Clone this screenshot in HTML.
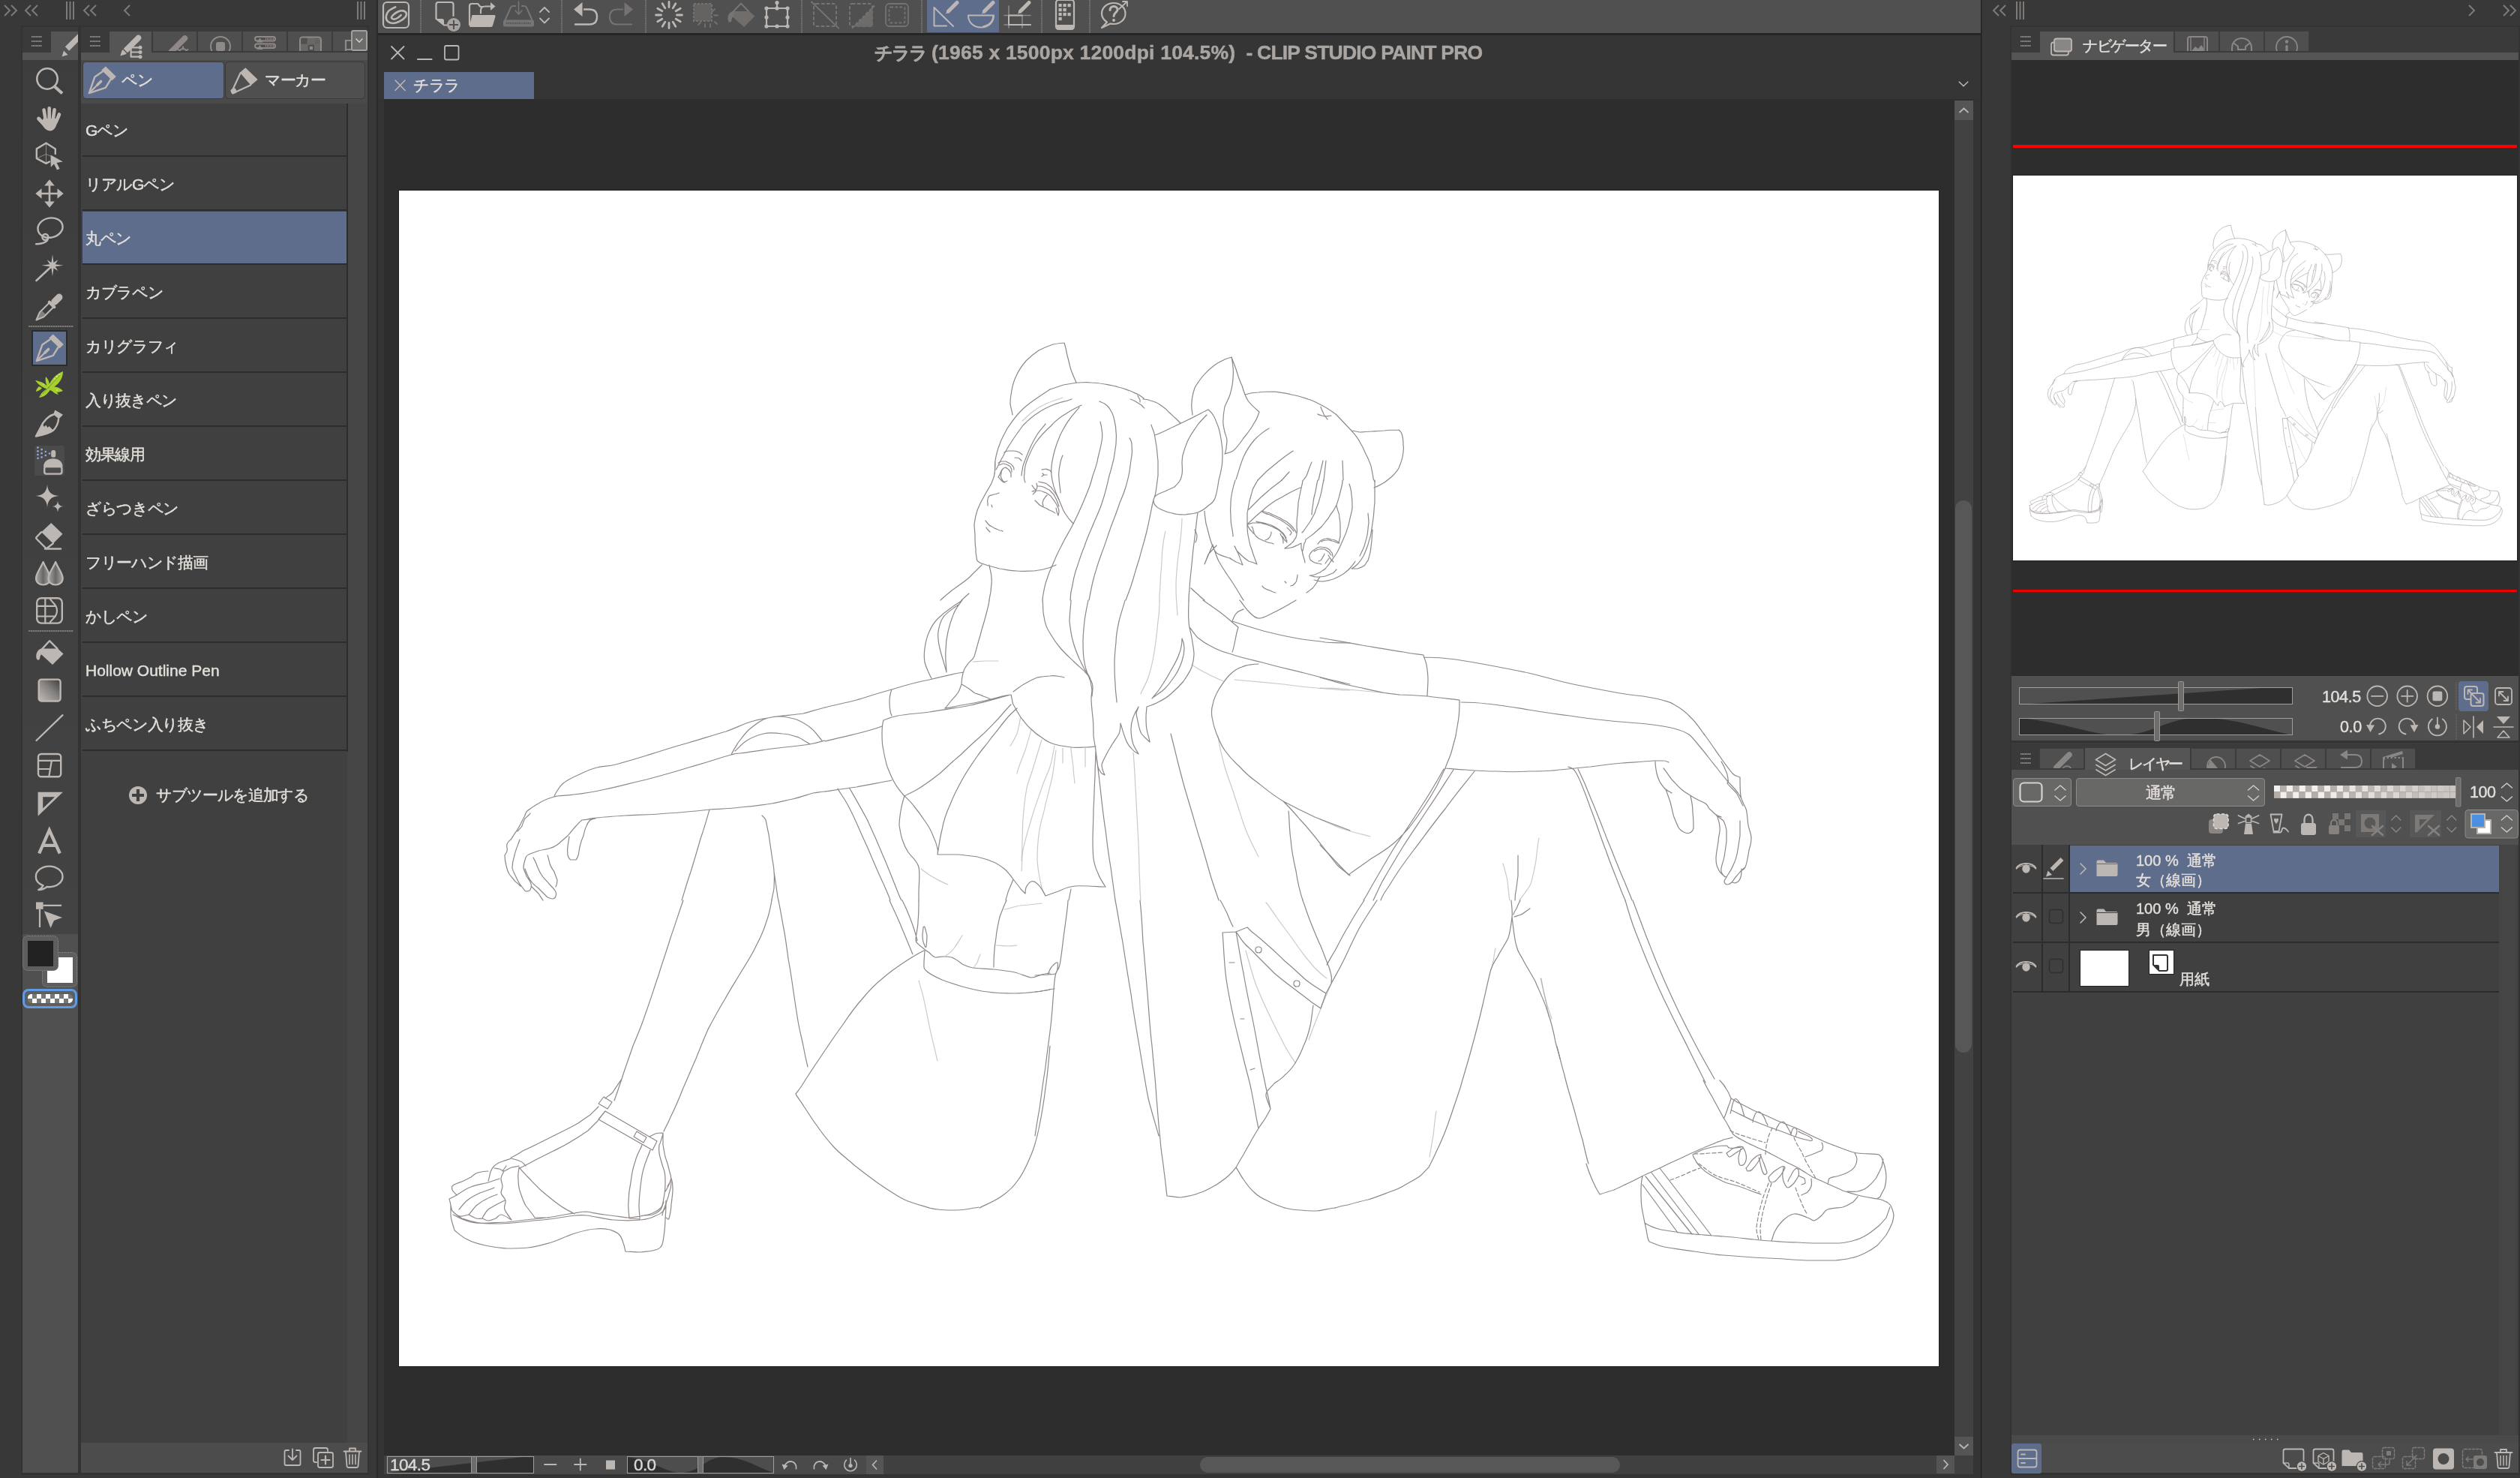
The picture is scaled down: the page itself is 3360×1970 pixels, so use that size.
<!DOCTYPE html>
<html lang="ja"><head><meta charset="utf-8"><title>CLIP STUDIO PAINT PRO</title>
<style>
*{box-sizing:border-box;margin:0;padding:0}
html,body{width:3360px;height:1970px;overflow:hidden;background:#383838}
body{position:relative;font-family:"Liberation Sans",sans-serif;color:#e2deda;-webkit-font-smoothing:antialiased}
.t{-webkit-text-stroke:.45px currentColor;will-change:transform}
.a{position:absolute}
.t{position:absolute;white-space:nowrap;line-height:1}
svg{position:absolute;overflow:visible}
.ic{fill:none;stroke:#bdb7b3;stroke-width:2.4;stroke-linecap:round;stroke-linejoin:round}
.if{fill:#bdb7b3;stroke:none}
.dim{opacity:.5}

</style></head>
<body>
<svg width="0" height="0" style="position:absolute">
<defs>

</defs>
</svg>
<svg style="left:0;top:0" width="500" height="36" viewBox="0 0 500 36">
<g fill="none" stroke="#7d7a78" stroke-width="2">
<path d="M6 7l7 7-7 7M15 7l7 7-7 7"/>
<path d="M41 7l-7 7 7 7M50 7l-7 7 7 7"/>
<path d="M89 2v24M93.5 2v24M98 2v24"/>
<path d="M119 7l-7 7 7 7M128 7l-7 7 7 7"/>
<path d="M173 7l-7 7 7 7"/>
<path d="M477 2v24M481.500 2v24M486 2v24"/>
</g></svg>
<div class="a" style="left:28px;top:34px;width:464px;height:1932px;background:#333;"></div>
<div class="a" style="left:30px;top:36px;width:74px;height:44px;background:#3a3a3a;"></div>
<div class="a" style="left:68px;top:42px;width:36px;height:38px;background:#555;"></div>
<div class="a" style="left:30px;top:70px;width:74px;height:10px;background:#555;"></div>
<div class="a" style="left:30px;top:80px;width:74px;height:1165px;background:linear-gradient(180deg,#3d3d3d,#434343);"></div>
<div class="a" style="left:30px;top:1245px;width:74px;height:718px;background:#505050;"></div>
<div class="a" style="left:108px;top:36px;width:382px;height:44px;background:#3a3a3a;"></div>
<div class="a" style="left:146px;top:42px;width:56px;height:38px;background:#555;"></div>
<div class="a" style="left:204px;top:42px;width:58px;height:26px;background:#4f4f4f;box-shadow:0 0 0 1px #3d3d3d"></div>
<div class="a" style="left:264px;top:42px;width:58px;height:26px;background:#4f4f4f;box-shadow:0 0 0 1px #3d3d3d"></div>
<div class="a" style="left:324px;top:42px;width:58px;height:26px;background:#4f4f4f;box-shadow:0 0 0 1px #3d3d3d"></div>
<div class="a" style="left:384px;top:42px;width:58px;height:26px;background:#4f4f4f;box-shadow:0 0 0 1px #3d3d3d"></div>
<div class="a" style="left:444px;top:42px;width:46px;height:26px;background:#4f4f4f;box-shadow:0 0 0 1px #3d3d3d"></div>
<div class="a" style="left:108px;top:70px;width:382px;height:10px;background:#555;"></div>
<div class="a" style="left:108px;top:80px;width:382px;height:58px;background:#4a4a4a;"></div>
<div class="a" style="left:108px;top:138px;width:382px;height:1785px;background:#404040;"></div>
<div class="a" style="left:463px;top:138px;width:27px;height:1785px;background:#464646;"></div>
<div class="a" style="left:108px;top:1923px;width:382px;height:40px;background:#4c4c4c;"></div>
<div class="a" style="left:111px;top:83px;width:187px;height:48px;background:#5f6d8c;border-radius:4px;box-shadow:0 0 0 1px #3c3c3c"></div>
<div class="a" style="left:301px;top:83px;width:185px;height:48px;background:#4f4f4f;border-radius:4px;box-shadow:0 0 0 1px #3a3a3a"></div>
<div class="t" style="left:162px;top:96px;font-size:21px;color:#e2deda;letter-spacing:-1.4px">ペン</div>
<div class="t" style="left:353px;top:96px;font-size:21px;color:#e2deda;letter-spacing:-1.4px">マーカー</div>
<div class="a" style="left:110px;top:207px;width:353px;height:2px;background:#2c2c2c;"></div>
<div class="t" style="left:114px;top:163px;font-size:21px;color:#e2deda;letter-spacing:-1.35px">Gペン</div>
<div class="a" style="left:110px;top:279px;width:353px;height:2px;background:#2c2c2c;"></div>
<div class="t" style="left:114px;top:235px;font-size:21px;color:#e2deda;letter-spacing:-1.35px">リアルGペン</div>
<div class="a" style="left:110px;top:282px;width:353px;height:69px;background:#5f6d8c;"></div>
<div class="a" style="left:110px;top:351px;width:353px;height:2px;background:#2c2c2c;"></div>
<div class="t" style="left:114px;top:307px;font-size:21px;color:#e2deda;letter-spacing:-1.35px">丸ペン</div>
<div class="a" style="left:110px;top:423px;width:353px;height:2px;background:#2c2c2c;"></div>
<div class="t" style="left:114px;top:379px;font-size:21px;color:#e2deda;letter-spacing:-1.35px">カブラペン</div>
<div class="a" style="left:110px;top:495px;width:353px;height:2px;background:#2c2c2c;"></div>
<div class="t" style="left:114px;top:451px;font-size:21px;color:#e2deda;letter-spacing:-1.35px">カリグラフィ</div>
<div class="a" style="left:110px;top:567px;width:353px;height:2px;background:#2c2c2c;"></div>
<div class="t" style="left:114px;top:523px;font-size:21px;color:#e2deda;letter-spacing:-1.35px">入り抜きペン</div>
<div class="a" style="left:110px;top:639px;width:353px;height:2px;background:#2c2c2c;"></div>
<div class="t" style="left:114px;top:595px;font-size:21px;color:#e2deda;letter-spacing:-1.35px">効果線用</div>
<div class="a" style="left:110px;top:711px;width:353px;height:2px;background:#2c2c2c;"></div>
<div class="t" style="left:114px;top:667px;font-size:21px;color:#e2deda;letter-spacing:-1.35px">ざらつきペン</div>
<div class="a" style="left:110px;top:783px;width:353px;height:2px;background:#2c2c2c;"></div>
<div class="t" style="left:114px;top:739px;font-size:21px;color:#e2deda;letter-spacing:-1.35px">フリーハンド描画</div>
<div class="a" style="left:110px;top:855px;width:353px;height:2px;background:#2c2c2c;"></div>
<div class="t" style="left:114px;top:811px;font-size:21px;color:#e2deda;letter-spacing:-1.35px">かしペン</div>
<div class="a" style="left:110px;top:927px;width:353px;height:2px;background:#2c2c2c;"></div>
<div class="t" style="left:114px;top:883px;font-size:21px;color:#e2deda;">Hollow Outline Pen</div>
<div class="a" style="left:110px;top:999px;width:353px;height:2px;background:#2c2c2c;"></div>
<div class="t" style="left:114px;top:955px;font-size:21px;color:#e2deda;letter-spacing:-1.35px">ふちペン入り抜き</div>
<div class="a" style="left:462px;top:138px;width:2px;height:864px;background:#2c2c2c;"></div>
<div class="t" style="left:208px;top:1049px;font-size:21px;color:#e2deda;letter-spacing:-1.35px">サブツールを追加する</div>
<svg style="left:119px;top:47px" width="16" height="16" viewBox="0 0 16 16"><path d="M1 2H15M1 8H15M1 14H15" stroke="#8a8785" stroke-width="2" stroke-dasharray="1.5 .5"/></svg>
<svg style="left:156px;top:42px" width="40" height="40" viewBox="0 0 40 40"><g fill="none" stroke="#bdb7b3" stroke-width="2.4" stroke-linecap="round" stroke-linejoin="round"><path d="M28.500 8.500L11 26" stroke-width="7.500"/><path fill="#bdb7b3" stroke="none" d="M4.300 32.600L6.600 25.200L11.800 30.200Z"/><path d="M8.300 23.600L13.500 28.800" stroke="#555" stroke-width="1.400"/><path d="M31 21.300H18.600V33.700H31M18.600 27.500H31" stroke-width="2.200"/><circle fill="#bdb7b3" stroke="none" cx="31" cy="21.300" r="2.500"/><circle fill="#bdb7b3" stroke="none" cx="31" cy="27.500" r="2.500"/><circle fill="#bdb7b3" stroke="none" cx="31" cy="33.700" r="2.500"/></g></svg>
<svg style="left:206px;top:44px;overflow:hidden" width="54" height="24" viewBox="0 0 54 24"><g fill="none" stroke="#8e8986" stroke-linecap="round"><path d="M40.500 7L22 25.500" stroke-width="7.500"/><circle cx="38" cy="26" r="5" stroke-width="2"/><path d="M38 18.500V20.500M31.500 22L33.200 23M44.500 22L42.800 23" stroke-width="2"/></g></svg>
<svg style="left:266px;top:44px;overflow:hidden" width="54" height="24" viewBox="0 0 54 24"><circle cx="28" cy="18" r="13" fill="none" stroke="#8e8986" stroke-width="2"/><rect x="22" y="12" width="12" height="12" rx="2.500" fill="#8e8986"/></svg>
<svg style="left:326px;top:44px;overflow:hidden" width="54" height="24" viewBox="0 0 54 24"><g fill="none" stroke="#8e8986" stroke-width="2"><rect x="14" y="5" width="27" height="5.600" rx="2.800"/><rect x="14" y="14.500" width="27" height="5.600" rx="2.800"/></g><path fill="#8e8986" d="M16.500 12.500L20.500 6.500L24.500 12.500ZM16.500 22L20.500 16L24.500 22Z"/><path d="M28 7.800H39M28 17.300H39" stroke="#8e8986" stroke-width="2.400" stroke-dasharray="1 1"/></svg>
<svg style="left:386px;top:44px;overflow:hidden" width="54" height="24" viewBox="0 0 54 24"><path d="M14 24V9.500Q14 5.500 18 5.500H38Q42 5.500 42 9.500V24" fill="#6a6866" stroke="#8e8986" stroke-width="2"/><rect x="15.200" y="6.700" width="8.500" height="8" fill="#505050"/><rect x="24.500" y="15.500" width="8.500" height="8.500" fill="#505050"/><rect x="27" y="18" width="4" height="4" fill="#8e8986"/><path d="M34.500 7.500H40M34.500 10.500H40M34.500 13H40" stroke="#505050" stroke-width="1.200" stroke-dasharray="1.500 1"/></svg>
<svg style="left:446px;top:44px;overflow:hidden" width="22" height="24" viewBox="0 0 22 24"><path d="M22 10H15V22H22M15 27V22" fill="none" stroke="#8e8986" stroke-width="2.200"/></svg>
<div class="a" style="left:468px;top:40px;width:22px;height:28px;background:#6c6c6a;border:2px solid #a39f9c;border-radius:3px"></div>
<svg style="left:468px;top:40px" width="22" height="28" viewBox="0 0 22 28"><path d="M6.500 11.500L11 16L15.500 11.500" fill="none" stroke="#cfcac6" stroke-width="1.600"/></svg>
<svg style="left:116px;top:87px" width="40" height="40" viewBox="0 0 40 40"><g fill="none" stroke="#bdb7b3" stroke-width="2.4" stroke-linecap="round" stroke-linejoin="round"><path fill="#bdb7b3" stroke="none" d="M24.800 1.600L38.800 15L33.600 20.200L19.300 6.500Z"/><path d="M20.500 8.500L10.400 15.400L2.800 37.100L24.800 29.800L31.500 19"/><path d="M3.500 36.400L18.500 21.500" stroke-width="2.200"/><path d="M14 26L18.600 21.400" stroke-width="3.600"/></g></svg>
<svg style="left:306px;top:87px" width="40" height="40" viewBox="0 0 40 40"><g fill="none" stroke="#bdb7b3" stroke-width="2.4" stroke-linecap="round" stroke-linejoin="round"><path fill="#bdb7b3" stroke="none" d="M21.300 3.300L37.700 18.900L28.600 26.800L13.800 9.700Z"/><path d="M14.500 10.500L4.500 32M28 26.500L8.500 35.500" stroke-width="2.200"/><rect fill="#bdb7b3" stroke="none" x="1.800" y="31" width="7.400" height="7" rx="2.200" transform="rotate(-24 5.500 34.500)"/></g></svg>
<svg style="left:171px;top:1047px" width="26" height="26" viewBox="0 0 26 26"><circle cx="13" cy="13" r="12" fill="#bdb7b3"/><path d="M13 5V21M5 13H21" stroke="#404040" stroke-width="4.200"/></svg>
<svg style="left:376px;top:1929px" width="28" height="28" viewBox="0 0 28 28"><g fill="none" stroke="#bdb7b3" stroke-width="1.800" stroke-linejoin="round" stroke-linecap="round"><path d="M9 4H5.500Q3.500 4 3.500 6V22Q3.500 24 5.500 24H22.500Q24.500 24 24.500 22V6Q24.500 4 22.500 4H19"/><path d="M14 2.500V17M8.500 11.500L14 17L19.500 11.500"/></g></svg>
<svg style="left:415px;top:1927px" width="32" height="32" viewBox="0 0 32 32"><g fill="none" stroke="#bdb7b3" stroke-width="1.800" stroke-linejoin="round" stroke-linecap="round"><path d="M7 22H5.500Q3 22 3 19.500V5.500Q3 3 5.500 3H19.500Q22 3 22 5.500V7"/><rect x="9" y="9" width="20" height="20" rx="2.500"/><path d="M19 13.500V24.500M13.500 19H24.500" stroke-width="2.200"/></g></svg>
<svg style="left:456px;top:1927px" width="28" height="32" viewBox="0 0 28 32"><g fill="none" stroke="#bdb7b3" stroke-width="1.800" stroke-linecap="round" stroke-linejoin="round"><path d="M2.500 7.500H25.500M10 7V3.500H18V7M5 7.500L6.500 27Q6.700 29 8.700 29H19.300Q21.300 29 21.500 27L23 7.500"/><path d="M10 12V24.500M14 12V24.500M18 12V24.500" stroke-width="1.600"/></g></svg>
<svg style="left:46px;top:88px" width="40" height="40" viewBox="0 0 40 40"><g fill="none" stroke="#bdb7b3" stroke-width="2.4" stroke-linecap="round" stroke-linejoin="round"><circle cx="17" cy="17" r="13.7" stroke-width="2.6"/><path d="M27 27.5L37 36.5" stroke-width="4.2" stroke-linecap="butt"/></g></svg>
<svg style="left:46px;top:138px" width="40" height="40" viewBox="0 0 40 40"><g fill="none" stroke="#bdb7b3" stroke-width="2.4" stroke-linecap="round" stroke-linejoin="round"><g stroke-width="4.6"><path d="M14.8 22L12.6 8.5M19.7 21V6.2M24.6 22L26.6 8.2M28.5 25L33 14.5"/><path d="M12.5 27.5L5.5 20" stroke-width="4.8"/></g><path fill="#bdb7b3" stroke="none" d="M11.5 20H29.5L30 25C29.5 31 25.5 36.5 21 36.5C16 36.5 12 32 9.5 27Z"/></g></svg>
<svg style="left:46px;top:188px" width="40" height="40" viewBox="0 0 40 40"><g fill="none" stroke="#bdb7b3" stroke-width="2.4" stroke-linecap="round" stroke-linejoin="round"><path d="M15.5 2.8L2.8 10.4V23.1L15.5 29.9L20 27.5M15.5 2.8L27.8 10.4V17"/><path d="M15.5 2.8V29.9M2.8 23.1L15.5 17.5L21 20" stroke-width="1" opacity=".6"/><path fill="#bdb7b3" stroke="none" d="M21.5 18.5L21.8 34.8L26 30.5L30 38.6L33.6 37L29.6 29L37.8 27.4Z"/></g></svg>
<svg style="left:46px;top:238px" width="40" height="40" viewBox="0 0 40 40"><g fill="none" stroke="#bdb7b3" stroke-width="2.4" stroke-linecap="round" stroke-linejoin="round"><path d="M20 8V32M8 20H32" stroke-width="2.6"/><path fill="#bdb7b3" stroke="none" d="M20 1.3L26.8 9.5H13.2ZM20 38.7L26.8 30.5H13.2ZM1.3 20L9.5 13.2V26.8ZM38.7 20L30.5 13.2V26.8Z"/></g></svg>
<svg style="left:46px;top:288px" width="40" height="40" viewBox="0 0 40 40"><g fill="none" stroke="#bdb7b3" stroke-width="2.4" stroke-linecap="round" stroke-linejoin="round"><ellipse cx="21" cy="15.6" rx="16.7" ry="13" transform="rotate(-12 21 15.6)"/><circle cx="14.4" cy="28" r="4"/><path d="M17.8 30.5C17 35 9 37.5 2.2 37.2"/></g></svg>
<svg style="left:46px;top:334px" width="40" height="40" viewBox="0 0 40 40"><g fill="none" stroke="#bdb7b3" stroke-width="2.4" stroke-linecap="round" stroke-linejoin="round"><path fill="#bdb7b3" stroke="none" d="M24.0 5.2L25.5 16.0L31.4 12.3L27.7 18.2L38.5 19.7L27.7 21.2L31.4 27.1L25.5 23.4L24.0 34.2L22.5 23.4L16.6 27.1L20.3 21.2L9.5 19.7L20.3 18.2L16.6 12.3L22.5 16.0Z"/><path d="M2.5 40L19 24.5" stroke-width="2.6"/></g></svg>
<svg style="left:46px;top:388px" width="40" height="40" viewBox="0 0 40 40"><g fill="none" stroke="#bdb7b3" stroke-width="2.4" stroke-linecap="round" stroke-linejoin="round"><g transform="translate(2.5,38.5) rotate(-45)"><path d="M0 0L10 -4H28M0 0L10 4H28" stroke-width="2.1"/><path fill="#bdb7b3" stroke="none" opacity=".55" d="M2 0L10 -3H14V3H10Z"/><rect fill="#bdb7b3" stroke="none" x="27" y="-6.6" width="4.2" height="13.2" rx="2"/><rect fill="#bdb7b3" stroke="none" x="30" y="-4.6" width="17.5" height="9.2" rx="4.6"/></g></g></svg>
<div class="a" style="left:42px;top:440px;width:48px;height:48px;background:#5f6d8c;border:2px solid #2b2b2b"></div>
<svg style="left:46px;top:444px" width="40" height="40" viewBox="0 0 40 40"><g fill="none" stroke="#bdb7b3" stroke-width="2.4" stroke-linecap="round" stroke-linejoin="round"><path fill="#bdb7b3" stroke="none" d="M24.8 1.6L38.8 15L33.6 20.2L19.3 6.5Z"/><path d="M20.5 8.5L10.4 15.4L2.8 37.1L24.8 29.8L31.5 19"/><path d="M3.500 36.400L18.500 21.500" stroke-width="2.2"/><path d="M14 26L18.6 21.400" stroke-width="3.600"/></g></svg>
<svg style="left:46px;top:494px" width="40" height="40" viewBox="0 0 40 40"><g fill="#a5d02e"><path d="M18 22C22 12 28 5 38 1C38 11 32 19 22 24Z"/><path d="M19 22C13 17 8 14 1 13C5 19 11 23 18 25Z"/><path d="M20 22C27 20 33 22 38 27C31 30 25 29 19 25Z"/><path d="M19 23C14 25 9 29 6 36C13 35 18 31 21 25Z"/><path d="M17 21C15 17 14 13 15 8C19 12 20 16 20 21Z"/><path d="M6 21C4 23 2 25 2 28C5 27 8 26 10 23Z"/><path d="M21 24C24 28 27 31 32 32C30 28 26 25 22 23Z"/></g><g fill="#e8f3c4"><circle cx="30" cy="8" r="1"/><circle cx="33" cy="5" r=".8"/><circle cx="27" cy="11" r=".8"/><circle cx="10" cy="32" r=".9"/><circle cx="30" cy="26" r=".8"/><circle cx="12" cy="18" r=".7"/></g><path d="M8 34L34 6" stroke="#6f8f1e" stroke-width=".8" fill="none"/></svg>
<svg style="left:46px;top:544px" width="40" height="40" viewBox="0 0 40 40"><g fill="none" stroke="#bdb7b3" stroke-width="2.4" stroke-linecap="round" stroke-linejoin="round"><path fill="#bdb7b3" stroke="none" d="M27.3 2.4L38 8.7L32.4 14.6L25.1 8.2Z"/><path d="M25.5 8.5C19 10 12 17 8.7 24.8L1.9 37.5M32 14.8C32 20 28 27 24.8 29.8C20 33.5 10 36 1.9 37.5"/><path fill="#bdb7b3" stroke="none" d="M1.9 37.5L8.7 24.8L10.8 21.5L13 25L15.2 22.5L17.5 26L19.5 24L25 29.6C20 33.5 10 36 1.9 37.5Z"/></g></svg>
<div class="a" style="left:46px;top:594px;width:40px;height:40px;background:#4b4b4b;border-radius:3px"></div>
<svg style="left:46px;top:594px" width="40" height="40" viewBox="0 0 40 40"><g fill="none" stroke="#bdb7b3" stroke-width="2.4" stroke-linecap="round" stroke-linejoin="round"><rect fill="#bdb7b3" stroke="none" x="22.2" y="6" width="6" height="9.6" rx="2.6"/><path fill="#bdb7b3" stroke="none" d="M12 28.5C12 20.5 18 17.2 24.8 17.2C31.6 17.2 37.6 20.5 37.6 28.5Z"/><rect x="13.2" y="28" width="23.2" height="9.6" rx="2.6"/><circle cx="20" cy="10.5" r="1.35" fill="#8fa8d4" stroke="none"/><circle cx="14.8" cy="8" r="1.35" fill="#8fa8d4" stroke="none"/><circle cx="14.8" cy="13" r="1.35" fill="#8fa8d4" stroke="none"/><circle cx="9.6" cy="5.2" r="1.35" fill="#8fa8d4" stroke="none"/><circle cx="9.6" cy="10.2" r="1.35" fill="#8fa8d4" stroke="none"/><circle cx="9.6" cy="15.4" r="1.35" fill="#8fa8d4" stroke="none"/><circle cx="4.4" cy="2.6" r="1.35" fill="#8fa8d4" stroke="none"/><circle cx="4.4" cy="7.4" r="1.35" fill="#8fa8d4" stroke="none"/><circle cx="4.4" cy="12" r="1.35" fill="#8fa8d4" stroke="none"/><circle cx="4.6" cy="16.8" r="1.35" fill="#8fa8d4" stroke="none"/></g></svg>
<svg style="left:46px;top:644px" width="40" height="40" viewBox="0 0 40 40"><g fill="none" stroke="#bdb7b3" stroke-width="2.4" stroke-linecap="round" stroke-linejoin="round"><path fill="#bdb7b3" stroke="none" d="M17 1.500Q17.700 16.300 32.500 17Q17.700 17.700 17 32.500Q16.300 17.700 1.500 17Q16.300 16.300 17 1.500ZM31 23.500Q31.300 30.700 38.500 31Q31.300 31.300 31 38.500Q30.700 31.300 23.500 31Q30.700 30.700 31 23.500Z"/></g></svg>
<svg style="left:46px;top:694px" width="40" height="40" viewBox="0 0 40 40"><g fill="none" stroke="#bdb7b3" stroke-width="2.4" stroke-linecap="round" stroke-linejoin="round"><path fill="#bdb7b3" stroke="none" stroke="#bdb7b3" stroke-width="1.6" d="M22.2 3L37.5 17.7L24.8 30.4L9.2 15.200Z"/><path d="M9.2 15.2L3 21.5Q1.500 23 3 24.5L14.5 36Q16 37.500 17.500 36L24.800 30.400"/><path d="M14 37.500H35"/></g></svg>
<svg style="left:46px;top:744px" width="40" height="40" viewBox="0 0 40 40"><defs><linearGradient id="gdrop" x1="0" x2="1"><stop offset="0" stop-color="#a9a4a1"/><stop offset=".5" stop-color="#6a6866"/><stop offset="1" stop-color="#a9a4a1"/></linearGradient></defs><g stroke="#bdb7b3" stroke-width="2.2" stroke-linejoin="round" fill="url(#gdrop)"><path d="M11.600 5C8 14 2 20 2 27C2 32 6 35.500 11.600 35.500C17 35.500 21 32 21 27C21 20 15 14 11.600 5Z"/><path d="M28.100 5C24.500 14 18.500 20 18.500 27C18.500 32 22.500 35.500 28.100 35.500C33.500 35.500 37.700 32 37.700 27C37.700 20 31.500 14 28.100 5Z"/></g></svg>
<svg style="left:46px;top:794px" width="40" height="40" viewBox="0 0 40 40"><g fill="none" stroke="#bdb7b3" stroke-width="2.4" stroke-linecap="round" stroke-linejoin="round"><rect x="3.200" y="3.200" width="33.600" height="33.400" rx="6"/><path d="M14.300 3.500V36.500M3.500 13.900H28.500M3.500 27.500H28M20.500 3.500C22 9 30 10 30 20C30 30 22 31 20.500 36.500" stroke-width="2.200"/></g></svg>
<svg style="left:46px;top:850px" width="40" height="40" viewBox="0 0 40 40"><g fill="none" stroke="#bdb7b3" stroke-width="2.4" stroke-linecap="round" stroke-linejoin="round"><path d="M10.500 14.600L20 4.200L30.500 14.600"/><path fill="#bdb7b3" stroke="none" stroke="#bdb7b3" stroke-width="2" d="M9.500 14.600H31L38.600 21.400L24 36L9 22.200Z"/><path fill="#bdb7b3" stroke="none" d="M12 13.800C5 14.500 1.800 20 2.300 26C2.600 30.500 6.800 31 7.200 27C7.500 24 8.500 22.500 10.500 21.500Z"/></g></svg>
<svg style="left:46px;top:900px" width="40" height="40" viewBox="0 0 40 40"><defs><linearGradient id="ggrad" x1="0" y1="1" x2="1" y2="0"><stop offset="0" stop-color="#c2bcb8"/><stop offset=".5" stop-color="#8a8684"/><stop offset="1" stop-color="#3c3c3c"/></linearGradient></defs><rect x="5.700" y="5.600" width="28.900" height="28.900" rx="3.500" fill="url(#ggrad)" stroke="#bdb7b3" stroke-width="2.400"/></svg>
<svg style="left:46px;top:950px" width="40" height="40" viewBox="0 0 40 40"><g fill="none" stroke="#bdb7b3" stroke-width="2.4" stroke-linecap="round" stroke-linejoin="round"><path d="M2.500 37L37.500 3.200" stroke-width="2.300"/></g></svg>
<svg style="left:46px;top:1000px" width="40" height="40" viewBox="0 0 40 40"><g fill="none" stroke="#bdb7b3" stroke-width="2.4" stroke-linecap="round" stroke-linejoin="round"><rect x="5" y="5" width="30.200" height="30.200" rx="4"/><path d="M5.500 13.800H34.500M5.500 25H20.800M22.900 13.800L19.300 35" stroke-width="2.200"/></g></svg>
<svg style="left:46px;top:1051px" width="40" height="40" viewBox="0 0 40 40"><g fill="none" stroke="#bdb7b3" stroke-width="2.4" stroke-linecap="round" stroke-linejoin="round"><path fill="#bdb7b3" stroke="none" fill-rule="evenodd" stroke="#bdb7b3" stroke-width="1.500" d="M4.600 4.700H37.900L4.600 36.700ZM11.200 11.300V26.500L27 11.300Z"/></g></svg>
<svg style="left:46px;top:1100px" width="40" height="40" viewBox="0 0 40 40"><g fill="none" stroke="#bdb7b3" stroke-width="2.4" stroke-linecap="round" stroke-linejoin="round"><path d="M6.200 37.500L19.800 6.500L33.800 37.500M10.800 26.800H29" stroke-width="4.300" stroke-linecap="butt" stroke-linejoin="miter"/></g></svg>
<svg style="left:46px;top:1150px" width="40" height="40" viewBox="0 0 40 40"><g fill="none" stroke="#bdb7b3" stroke-width="2.4" stroke-linecap="round" stroke-linejoin="round"><path d="M11.600 30.300C5.500 28 1.800 23.500 1.800 18.400C1.800 10.800 9.700 4.600 19.600 4.600C29.500 4.600 37.500 10.800 37.500 18.400C37.500 26 29.500 32.200 19.600 32.200C18.500 32.200 17.500 32.100 16.600 32C13.500 34.500 9.500 36 5.300 36C8.500 34.500 10.500 32.500 11.600 30.300Z"/></g></svg>
<svg style="left:46px;top:1200px" width="40" height="40" viewBox="0 0 40 40"><g fill="none" stroke="#bdb7b3" stroke-width="2.4" stroke-linecap="round" stroke-linejoin="round"><rect fill="#bdb7b3" stroke="none" x="2" y="2.500" width="9.600" height="9.300"/><path d="M11.600 6.800H36M7 11.800V36" stroke-width="2.200" stroke-linecap="butt"/><path fill="#bdb7b3" stroke="none" d="M12.800 14.300L37 23L26 27L21.500 37Z"/></g></svg>
<div class="a" style="left:38px;top:434px;width:60px;height:2px;background:repeating-linear-gradient(90deg,#7a7877 0 2px,#5a5a5a 2px 3px)"></div>
<div class="a" style="left:38px;top:840px;width:60px;height:2px;background:repeating-linear-gradient(90deg,#7a7877 0 2px,#5a5a5a 2px 3px)"></div>
<div class="a" style="left:56px;top:1269px;width:47px;height:47px;background:#5e5e5e;border-radius:7px;border:1px dotted #8a8a8a"></div>
<div class="a" style="left:63px;top:1276px;width:34px;height:34px;background:#fff"></div>
<div class="a" style="left:30px;top:1247px;width:48px;height:47px;background:#5e5e5e;border-radius:7px;border:1px dotted #8a8a8a"></div>
<div class="a" style="left:37px;top:1254px;width:34px;height:34px;background:#222"></div>
<div class="a" style="left:30px;top:1318px;width:73px;height:26px;background:#5e5e5e;border-radius:8px;border:3px solid #5f9be4"></div>
<div class="a" style="left:37px;top:1325px;width:60px;height:12px;border-radius:5px;background-color:#fff;background-image:linear-gradient(45deg,#777 25%,transparent 25%,transparent 75%,#777 75%),linear-gradient(45deg,#777 25%,transparent 25%,transparent 75%,#777 75%);background-size:12px 12px;background-position:0 0,6px 6px"></div>
<svg style="left:41px;top:47px" width="16" height="16" viewBox="0 0 16 16"><path d="M1 2H15M1 8H15M1 14H15" stroke="#8a8785" stroke-width="2" stroke-dasharray="1.500 .5"/></svg>
<svg style="left:68px;top:42px;overflow:hidden" width="36" height="38" viewBox="68 42 36 38"><path d="M108 46.500L89.500 65" stroke="#bdb7b3" stroke-width="7.500" stroke-linecap="butt"/><path d="M82.500 75.500L85 67.500L90.500 73Z" fill="#bdb7b3"/><path d="M86.800 66L92 71.200" stroke="#555" stroke-width="1.400"/></svg>
<div class="a" style="left:502px;top:0px;width:2px;height:1970px;background:#2a2a2a;"></div>
<div class="a" style="left:504px;top:0px;width:2137px;height:44px;background:#505050;"></div>
<div class="a" style="left:504px;top:44px;width:2137px;height:3px;background:#262626;"></div>
<div class="a" style="left:2641px;top:0px;width:1px;height:1970px;background:#1f1f1f;"></div>
<div class="a" style="left:2642px;top:0px;width:1px;height:1970px;background:#303030;"></div>
<div class="a" style="left:504px;top:47px;width:2137px;height:85px;background:#353535;"></div>
<div class="a" style="left:512px;top:132px;width:2128px;height:1838px;background:#2d2d2d;"></div>
<div class="a" style="left:504px;top:132px;width:8px;height:1838px;background:#333;"></div>
<div class="a" style="left:512px;top:96px;width:200px;height:36px;background:#5f6d8c;"></div>
<div class="t" style="left:551px;top:103px;font-size:21px;color:#e2deda;letter-spacing:-1.4px">チララ</div>
<div class="t" style="left:1166px;top:57px;font-size:26.5px;color:#aaa5a1;font-weight:bold;letter-spacing:-0.3px"><span id="t1" style="letter-spacing:-2px;font-size:24px">チララ</span> <span id="t2" style="letter-spacing:.2px">(1965 x 1500px 1200dpi 104.5%)</span>&nbsp; <span id="t3" style="letter-spacing:-.8px">- CLIP STUDIO PAINT PRO</span></div>
<div class="a" style="left:531px;top:253px;width:2055px;height:1569px;background:#1f1f1f;"></div>
<div class="a" style="left:532px;top:254px;width:2053px;height:1567px;background:#fff;"></div>
<div class="a" style="left:2631px;top:132px;width:10px;height:1838px;background:#333;"></div>
<div class="a" style="left:2606px;top:134px;width:25px;height:1806px;background:#424242;"></div>
<div class="a" style="left:2606px;top:134px;width:25px;height:26px;background:#555;"></div>
<div class="a" style="left:2606px;top:1915px;width:25px;height:25px;background:#555;"></div>
<div class="a" style="left:2607px;top:667px;width:22px;height:736px;background:#575757;border-radius:11px"></div>
<div class="a" style="left:512px;top:1940px;width:2119px;height:25px;background:#404040;"></div>
<div class="a" style="left:1600px;top:1942px;width:560px;height:21px;background:#575757;border-radius:11px"></div>
<div class="a" style="left:2582px;top:1940px;width:24px;height:24px;background:#555;"></div>
<div class="a" style="left:512px;top:1965px;width:2128px;height:5px;background:#333;"></div>
<svg style="left:504px;top:47px" width="2136" height="90" viewBox="504 47 2136 90"><g fill="none" stroke="#bdb7b3" stroke-width="1.800" stroke-linecap="round" stroke-linejoin="round"><path d="M522 62L538.500 78.500M538.500 62L522 78.500"/><path d="M557 79H575.500" stroke-width="2.200"/><rect x="593" y="61" width="18.500" height="18.500" rx="2"/><path d="M527 107L540 120.500M540 107L527 120.500" stroke-width="1.600"/><path d="M2612.300 109.200L2618 114.800L2623.700 109.200" stroke-width="1.600"/></g></svg>
<svg style="left:2606px;top:134px" width="25" height="26" viewBox="0 0 25 26"><path d="M6.500 16L12.500 10.500L18.500 16" fill="none" stroke="#bdb7b3" stroke-width="1.800"/></svg>
<svg style="left:2606px;top:1915px" width="25" height="25" viewBox="0 0 25 25"><path d="M6.500 10L12.500 15.500L18.500 10" fill="none" stroke="#bdb7b3" stroke-width="1.800"/></svg>
<svg style="left:2582px;top:1940px" width="24" height="24" viewBox="0 0 24 24"><path d="M9.500 6L15 12L9.500 18" fill="none" stroke="#bdb7b3" stroke-width="1.800"/></svg>
<div class="a" style="left:515px;top:1940px;width:663px;height:25px;background:#4a4a4a"></div>
<div class="a" style="left:516px;top:1941px;width:196px;height:23px;background:#2c2c2c;border:1px solid #a19d9a"></div>
<svg style="left:517px;top:1942px" width="194" height="21" viewBox="0 0 194 21"><rect width="194" height="21" fill="#4d4d4d"/><path d="M0 21L180 0H194V21Z" fill="#2f2f2f"/></svg>
<div class="a" style="left:628px;top:1941px;width:8px;height:23px;background:#6f6d6b;border:1px solid #9a9794"></div>
<div class="a" style="left:836px;top:1941px;width:196px;height:23px;background:#2c2c2c;border:1px solid #a19d9a"></div>
<svg style="left:837px;top:1942px" width="194" height="21" viewBox="0 0 194 21"><rect width="194" height="21" fill="#4d4d4d"/><path d="M0 0C31 4 52 21 70 21C97 21 103 0 128 0C155 0 175 15 194 21H0Z" fill="#2f2f2f"/></svg>
<div class="a" style="left:930px;top:1941px;width:8px;height:23px;background:#6f6d6b;border:1px solid #9a9794"></div>
<div class="t" style="left:520px;top:1942px;font-size:22.500px;color:#dcd8d4;letter-spacing:-.6px">104.5</div>
<div class="t" style="left:845px;top:1942px;font-size:22.500px;color:#dcd8d4;letter-spacing:-.6px">0.0</div>
<svg style="left:715px;top:1940px" width="470" height="25" viewBox="715 1940 470 25"><g fill="none" stroke="#bdb7b3" stroke-width="1.800" stroke-linecap="round"><path d="M726 1952H741.500M766 1952H781.500M773.800 1944.500V1959.500"/><path d="M1046.500 1954A7.500 7.500 0 1 1 1061.500 1957.500" /><path d="M1100.500 1954A7.500 7.500 0 1 0 1085.500 1957.500"/><path d="M1134 1943.500V1952M1128.500 1946.200A8.300 8.300 0 1 0 1139.500 1946.200" stroke-width="1.600"/></g><path d="M1042.500 1951.500L1050.500 1953.500L1045.500 1959Z" fill="#bdb7b3"/><path d="M1104.500 1951.500L1096.500 1953.500L1101.500 1959Z" fill="#bdb7b3"/><circle cx="1134" cy="1953.500" r="2.600" fill="#bdb7b3"/><rect x="808" y="1946.500" width="12" height="12" fill="#bdb7b3"/></svg>
<div class="a" style="left:1155px;top:1940px;width:23px;height:25px;background:#555"></div>
<svg style="left:1155px;top:1940px" width="23" height="25" viewBox="0 0 23 25"><path d="M14 6.500L8.500 12.500L14 18.500" fill="none" stroke="#bdb7b3" stroke-width="1.600"/></svg>
<div class="a" style="left:560px;top:0;width:2px;height:44px;background:repeating-linear-gradient(180deg,#6e6c6b 0 2px,#5a5a5a 2px 3px)"></div>
<div class="a" style="left:748px;top:0;width:2px;height:44px;background:repeating-linear-gradient(180deg,#6e6c6b 0 2px,#5a5a5a 2px 3px)"></div>
<div class="a" style="left:860px;top:0;width:2px;height:44px;background:repeating-linear-gradient(180deg,#6e6c6b 0 2px,#5a5a5a 2px 3px)"></div>
<div class="a" style="left:1068px;top:0;width:2px;height:44px;background:repeating-linear-gradient(180deg,#6e6c6b 0 2px,#5a5a5a 2px 3px)"></div>
<div class="a" style="left:1228px;top:0;width:2px;height:44px;background:repeating-linear-gradient(180deg,#6e6c6b 0 2px,#5a5a5a 2px 3px)"></div>
<div class="a" style="left:1388px;top:0;width:2px;height:44px;background:repeating-linear-gradient(180deg,#6e6c6b 0 2px,#5a5a5a 2px 3px)"></div>
<div class="a" style="left:1452px;top:0;width:2px;height:44px;background:repeating-linear-gradient(180deg,#6e6c6b 0 2px,#5a5a5a 2px 3px)"></div>
<div class="a" style="left:1236px;top:0;width:96px;height:43px;background:#5f6d8c"></div>
<svg style="left:504px;top:0" width="1040" height="46" viewBox="504 0 1040 46"><rect x="511" y="3" width="34" height="34" rx="5" fill="none" stroke="#bdb7b3" stroke-width="2.2" stroke-linecap="round" stroke-linejoin="round"/><path d="M527.2 9.3C525.7 10.2 520.5 12.3 518.4 14.4C516.3 16.5 515.0 19.4 514.8 21.7C514.5 24.0 515.3 26.8 516.9 28.4C518.5 29.9 521.9 31.0 524.6 31.0C527.3 31.0 530.3 29.7 532.9 28.4C535.5 27.1 538.6 25.0 540.1 23.2C541.6 21.4 542.2 19.0 541.7 17.5C541.2 16.0 538.8 14.7 537.0 14.4C535.2 14.1 532.9 14.6 530.8 15.5C528.7 16.4 526.1 18.2 524.6 19.6C523.1 21.0 521.8 22.7 522.0 23.7C522.2 24.7 524.2 25.6 525.7 25.6C527.2 25.6 529.3 24.4 530.8 23.5C532.3 22.6 534.1 20.7 534.7 20.1" fill="none" stroke="#bdb7b3" stroke-width="2.6" stroke-linecap="round" stroke-linejoin="round"/><path d="M600 33.500H592L581.500 25V6Q581.500 3 584.500 3H601.500Q604.500 3 604.500 6V21" fill="none" stroke="#bdb7b3" stroke-width="2.2" stroke-linecap="round" stroke-linejoin="round"/><path d="M581.500 25H589.500Q592 25 592 27.500V33.500Z" fill="#bdb7b3" stroke="none"/><circle cx="605" cy="33" r="9" fill="#a7a29f"/><path d="M605 27V39M599 33H611" stroke="#505050" stroke-width="2"/><path d="M626 33V8Q626 5 629 5H637L640.500 9H644" fill="none" stroke="#bdb7b3" stroke-width="2.2" stroke-linecap="round" stroke-linejoin="round"/><path d="M629.500 20H659Q661 20 660.500 22L657 34Q656.500 36 654.500 36H627.500Q625.500 36 626 34Z" fill="#bdb7b3" stroke="none" stroke="#bdb7b3" stroke-width="1.500" stroke-linejoin="round"/><path d="M641 17.500V14Q641 8.500 647 8.500H655" fill="none" stroke="#bdb7b3" stroke-width="2.2" stroke-linecap="round" stroke-linejoin="round"/><path d="M654 3L660.500 8.500L654 14Z" fill="#bdb7b3" stroke="none"/><g opacity=".75"><path d="M672 30L681 10Q682 8 684 8H687M711 30L702 10Q701 8 699 8H696" fill="none" stroke="#858180" stroke-width="2" stroke-linecap="round" stroke-linejoin="round"/><path d="M691.500 2V18M687 14L691.500 19L696 14" fill="none" stroke="#858180" stroke-width="1.6" stroke-linecap="round" stroke-linejoin="round"/><rect x="671" y="26.500" width="41" height="9" rx="2.500" fill="#858180" stroke="none"/><path d="M675 31H708" stroke="#505050" stroke-width="2.500" stroke-dasharray="1.200 1.200"/></g><path d="M720 16L726 10L732 16M720 24.500L726 30.500L732 24.500" fill="none" stroke="#bdb7b3" stroke-width="1.8" stroke-linecap="round" stroke-linejoin="round"/><path d="M779 12.500H786Q796 12.500 796 22.500Q796 32.500 786 32.500H767" fill="none" stroke="#bdb7b3" stroke-width="2.4" stroke-linecap="round" stroke-linejoin="round"/><path d="M765 12.500L776.500 3V22Z" fill="#bdb7b3" stroke="none"/><g opacity=".7"><path d="M830 12.500H823Q813 12.500 813 22.500Q813 32.500 823 32.500H842" fill="none" stroke="#858180" stroke-width="2.2" stroke-linecap="round" stroke-linejoin="round"/><path d="M844 12.500L832.500 3V22Z" fill="#858180" stroke="none"/></g><path d="M892.0 9.5L892.0 2.5M897.2 10.9L900.8 4.8M901.1 14.8L907.2 11.2M902.5 20.0L909.5 20.0M901.1 25.2L907.2 28.7M897.2 29.1L900.8 35.2M892.0 30.5L892.0 37.5M886.8 29.1L883.2 35.2M882.9 25.3L876.8 28.8M881.5 20.0L874.5 20.0M882.9 14.8L876.8 11.2M886.8 10.9L883.2 4.8" fill="none" stroke="#bdb7b3" stroke-width="2.8" stroke-linecap="round" stroke-linejoin="round"/><g opacity=".7"><rect x="925" y="5" width="24" height="23" fill="#6f6c6a" stroke="#858180" stroke-width="2" stroke-dasharray="3 2"/><path d="M953 12L949 16M957 20.500H952M953 29L956 32M947 32V36M940 32V36M934 30L931 33" fill="none" stroke="#858180" stroke-width="1.8" stroke-linecap="round" stroke-linejoin="round"/></g><g opacity=".75"><path d="M978 15L988 4.500L998 15" fill="none" stroke="#858180" stroke-width="2" stroke-linecap="round" stroke-linejoin="round"/><path d="M977 15H999L1006.500 21.500L992 36L977 22.500Z" fill="#7b7775" stroke="none" stroke="#858180" stroke-width="1.600" stroke-linejoin="round"/><path d="M979 14.500C973 15 970 20 970.500 26C970.800 30.500 975 31 975.500 27C975.800 24 976.500 22.500 978.500 21.500Z" fill="#858180" stroke="none"/></g><path d="M1022 11H1050V35H1022ZM1036 11V4" fill="none" stroke="#bdb7b3" stroke-width="2.2" stroke-linecap="round" stroke-linejoin="round"/><circle cx="1022" cy="11" r="2.600" fill="#bdb7b3" stroke="none"/><circle cx="1036" cy="11" r="2.600" fill="#bdb7b3" stroke="none"/><circle cx="1050" cy="11" r="2.600" fill="#bdb7b3" stroke="none"/><circle cx="1022" cy="23" r="2.600" fill="#bdb7b3" stroke="none"/><circle cx="1050" cy="23" r="2.600" fill="#bdb7b3" stroke="none"/><circle cx="1022" cy="35" r="2.600" fill="#bdb7b3" stroke="none"/><circle cx="1036" cy="35" r="2.600" fill="#bdb7b3" stroke="none"/><circle cx="1050" cy="35" r="2.600" fill="#bdb7b3" stroke="none"/><circle cx="1036" cy="3.5" r="2.600" fill="#bdb7b3" stroke="none"/><g opacity=".7"><rect x="1085" y="5" width="30" height="30" rx="3" fill="none" stroke="#858180" stroke-width="2" stroke-dasharray="4.500 2.500"/><path d="M1082 2.500L1118 37.500" fill="none" stroke="#858180" stroke-width="2" stroke-linecap="round" stroke-linejoin="round"/></g><g opacity=".7"><rect x="1133" y="5" width="30" height="30" rx="3" fill="none" stroke="#858180" stroke-width="2" stroke-dasharray="4.500 2.500"/><path d="M1163.500 10V35.500H1138Z" fill="#7b7775" stroke="none"/><path d="M1136 37.500L1166 7.500" stroke="#858180" stroke-width="2" stroke-dasharray="4 2.500"/></g><g opacity=".7"><rect x="1181" y="5" width="30" height="30" rx="5" fill="none" stroke="#858180" stroke-width="1.8" stroke-linecap="round" stroke-linejoin="round"/><rect x="1185.500" y="9.500" width="21" height="21" rx="2" fill="none" stroke="#858180" stroke-width="1.800" stroke-dasharray="3.500 2.500"/></g><path d="M1245.500 10V34.500H1262M1245.500 10L1271 35" fill="none" stroke="#bdb7b3" stroke-width="2" stroke-linecap="round" stroke-linejoin="round"/><path d="M1264.5 15.0L1276.0 3.5" stroke="#bdb7b3" stroke-width="5" stroke-linecap="round" fill="none"/><path d="M1261.0 18.5L1266.1 16.5L1263.0 13.4Z" fill="#bdb7b3"/><path d="M1291 20.500H1325C1325 30 1318 36.500 1308 36.500C1298 36.500 1291 30 1291 20.500Z" fill="none" stroke="#bdb7b3" stroke-width="2" stroke-linecap="round" stroke-linejoin="round"/><path d="M1324 21C1324 28 1319 33.500 1311 35" fill="none" stroke="#bdb7b3" stroke-width="1.4" stroke-linecap="round" stroke-linejoin="round"/><path d="M1312.5 15.0L1324.0 3.5" stroke="#bdb7b3" stroke-width="5" stroke-linecap="round" fill="none"/><path d="M1309.0 18.5L1314.1 16.5L1311.0 13.4Z" fill="#bdb7b3"/><path d="M1345 8V37M1339 33H1374M1363 21V37M1339 20.500H1374" fill="none" stroke="#8c8987" stroke-width="1.6" stroke-linecap="round" stroke-linejoin="round"/><path d="M1345 20.500H1363M1345 20.500V33H1374" fill="none" stroke="#bdb7b3" stroke-width="2" stroke-linecap="round" stroke-linejoin="round"/><path d="M1360.5 15.0L1372.0 3.5" stroke="#bdb7b3" stroke-width="5" stroke-linecap="round" fill="none"/><path d="M1357.0 18.5L1362.1 16.5L1359.0 13.4Z" fill="#bdb7b3"/><rect x="1408" y="0" width="24" height="39" rx="3.500" fill="none" stroke="#bdb7b3" stroke-width="2.2" stroke-linecap="round" stroke-linejoin="round"/><path d="M1408 33H1432V36Q1432 39 1429 39H1411Q1408 39 1408 36Z" fill="#bdb7b3" stroke="none"/><rect x="1411.5" y="5" width="4.200" height="4.200" fill="#bdb7b3" stroke="none"/><rect x="1417.5" y="5" width="4.200" height="4.200" fill="#bdb7b3" stroke="none"/><rect x="1423.5" y="5" width="4.200" height="4.200" fill="#bdb7b3" stroke="none"/><rect x="1411.5" y="11" width="4.200" height="4.200" fill="#bdb7b3" stroke="none"/><rect x="1417.5" y="11" width="4.200" height="4.200" fill="#bdb7b3" stroke="none"/><rect x="1411.5" y="17" width="4.200" height="4.200" fill="#bdb7b3" stroke="none"/><rect x="1417.5" y="17" width="4.200" height="4.200" fill="#bdb7b3" stroke="none"/><rect x="1423.5" y="17" width="4.200" height="4.200" fill="#bdb7b3" stroke="none"/><rect x="1411.5" y="23" width="4.200" height="4.200" fill="#bdb7b3" stroke="none"/><path d="M1476 29.500C1471.500 26.500 1469 22.500 1469 18C1469 9.500 1476.500 4 1485 4C1493.500 4 1500.500 10 1500.500 18C1500.500 26 1493.500 32 1485 32C1483.500 32 1482 31.800 1480.500 31.500L1469 37Z" fill="none" stroke="#bdb7b3" stroke-width="2.2" stroke-linecap="round" stroke-linejoin="round"/><path d="M1480 13.500C1480 10.500 1482 8.500 1485 8.500C1488 8.500 1490 10.500 1490 13C1490 16.500 1485 17 1485 21.500" fill="none" stroke="#bdb7b3" stroke-width="3" stroke-linecap="round" stroke-linejoin="round"/><circle cx="1485" cy="27" r="2" fill="#bdb7b3" stroke="none"/><path d="M1492 12L1503 2M1497 2H1503V8" fill="none" stroke="#bdb7b3" stroke-width="1.8" stroke-linecap="round" stroke-linejoin="round"/></svg>
<svg style="left:2643px;top:0" width="717" height="36" viewBox="2643 0 717 36">
<g fill="none" stroke="#7d7a78" stroke-width="2">
<path d="M2665 7l-7 7 7 7M2674 7l-7 7 7 7"/>
<path d="M2689 2v24M2693.5 2v24M2698 2v24"/>
<path d="M3292 7l7 7-7 7"/>
<path d="M3338 7l7 7-7 7M3347 7l7 7-7 7"/>
</g></svg>
<div class="a" style="left:2680px;top:34px;width:680px;height:1932px;background:#333;"></div>
<div class="a" style="left:2682px;top:36px;width:676px;height:44px;background:#3a3a3a;"></div>
<div class="a" style="left:2720px;top:42px;width:178px;height:38px;background:#555;"></div>
<div class="a" style="left:2900px;top:42px;width:58px;height:26px;background:#4f4f4f;box-shadow:0 0 0 1px #3d3d3d"></div>
<div class="a" style="left:2960px;top:42px;width:58px;height:26px;background:#4f4f4f;box-shadow:0 0 0 1px #3d3d3d"></div>
<div class="a" style="left:3020px;top:42px;width:58px;height:26px;background:#4f4f4f;box-shadow:0 0 0 1px #3d3d3d"></div>
<div class="a" style="left:2682px;top:70px;width:676px;height:10px;background:#555;"></div>
<div class="a" style="left:2682px;top:80px;width:676px;height:821px;background:#2d2d2d;"></div>
<div class="a" style="left:2684px;top:193px;width:672px;height:4px;background:#f00;"></div>
<div class="a" style="left:2684px;top:786px;width:672px;height:3px;background:#e00;"></div>
<div class="a" style="left:2683px;top:233px;width:674px;height:515px;background:#222;"></div>
<div class="a" style="left:2684px;top:234px;width:672px;height:513px;background:#fff;"></div>
<div class="t" style="left:2777px;top:51px;font-size:20px;color:#e2deda;letter-spacing:-1.5px">ナビゲーター</div>
<div class="a" style="left:2682px;top:901px;width:676px;height:86px;background:#505050;"></div>
<div class="a" style="left:2682px;top:990px;width:676px;height:50px;background:#3a3a3a;"></div>
<div class="a" style="left:2780px;top:997px;width:140px;height:40px;background:#555;"></div>
<div class="a" style="left:2720px;top:998px;width:58px;height:26px;background:#4f4f4f;box-shadow:0 0 0 1px #3d3d3d"></div>
<div class="a" style="left:2922px;top:998px;width:58px;height:26px;background:#4f4f4f;box-shadow:0 0 0 1px #3d3d3d"></div>
<div class="a" style="left:2982px;top:998px;width:58px;height:26px;background:#4f4f4f;box-shadow:0 0 0 1px #3d3d3d"></div>
<div class="a" style="left:3042px;top:998px;width:58px;height:26px;background:#4f4f4f;box-shadow:0 0 0 1px #3d3d3d"></div>
<div class="a" style="left:3102px;top:998px;width:58px;height:26px;background:#4f4f4f;box-shadow:0 0 0 1px #3d3d3d"></div>
<div class="a" style="left:3162px;top:998px;width:58px;height:26px;background:#4f4f4f;box-shadow:0 0 0 1px #3d3d3d"></div>
<div class="a" style="left:2682px;top:1026px;width:676px;height:100px;background:#505050;"></div>
<div class="t" style="left:2838px;top:1008px;font-size:20px;color:#e2deda;letter-spacing:-2.2px">レイヤー</div>
<div class="a" style="left:2684px;top:1037px;width:78px;height:38px;background:#686866;border-radius:4px;border:1px solid #8d8a88"></div>
<div class="a" style="left:2768px;top:1037px;width:252px;height:38px;background:#686866;border-radius:4px;border:1px solid #8d8a88"></div>
<div class="t" style="left:2861px;top:1047px;font-size:20.5px;color:#e2deda;letter-spacing:-.6px">通常</div>
<div class="t" style="left:3293px;top:1046px;font-size:21.5px;color:#e2deda;letter-spacing:-.5px">100</div>
<div class="a" style="left:2682px;top:1126px;width:676px;height:787px;background:#404040;"></div>
<div class="a" style="left:3332px;top:1126px;width:24px;height:787px;background:#454545;"></div>
<div class="a" style="left:2760px;top:1127px;width:572px;height:62px;background:#5f6d8c;"></div>
<div class="a" style="left:2684px;top:1189px;width:648px;height:2px;background:#2c2c2c;"></div>
<div class="a" style="left:2684px;top:1255px;width:648px;height:2px;background:#2c2c2c;"></div>
<div class="a" style="left:2684px;top:1321px;width:648px;height:2px;background:#2c2c2c;"></div>
<div class="a" style="left:2722px;top:1126px;width:2px;height:197px;background:#2c2c2c;"></div>
<div class="a" style="left:2758px;top:1126px;width:2px;height:197px;background:#2c2c2c;"></div>
<div class="t" style="left:2848px;top:1137px;font-size:20px;color:#e2deda;">100 %&nbsp; 通常</div>
<div class="t" style="left:2848px;top:1163px;font-size:20px;color:#e2deda;">女（線画）</div>
<div class="t" style="left:2848px;top:1201px;font-size:20px;color:#e2deda;">100 %&nbsp; 通常</div>
<div class="t" style="left:2848px;top:1229px;font-size:20px;color:#e2deda;">男（線画）</div>
<div class="t" style="left:2906px;top:1295px;font-size:20px;color:#e2deda;">用紙</div>
<div class="a" style="left:2773px;top:1266px;width:66px;height:49px;background:#fff;border:1px solid #222"></div>
<div class="a" style="left:2865px;top:1266px;width:34px;height:33px;background:#fff;border:1px solid #222"></div>
<div class="a" style="left:2682px;top:1913px;width:676px;height:10px;background:#4a4a4a;"></div>
<div class="a" style="left:2682px;top:1923px;width:676px;height:40px;background:#4c4c4c;"></div>
<div class="a" style="left:2682px;top:1924px;width:40px;height:40px;background:#5f6d8c;border-radius:3px"></div>
<svg style="left:2693px;top:47px" width="16" height="16" viewBox="0 0 16 16"><path d="M1 2H15M1 8H15M1 14H15" stroke="#8a8785" stroke-width="2" stroke-dasharray="1.500 .5"/></svg>
<svg style="left:2693px;top:1003px" width="16" height="16" viewBox="0 0 16 16"><path d="M1 2H15M1 8H15M1 14H15" stroke="#8a8785" stroke-width="2" stroke-dasharray="1.500 .5"/></svg>
<svg style="left:2683px;top:36px" width="677" height="44" viewBox="2683 36 677 44"><rect x="2735" y="56.500" width="23" height="17" rx="3" fill="none" stroke="#bdb7b3" stroke-width="1.8" stroke-linecap="round" stroke-linejoin="round"/><rect x="2739" y="51.500" width="23" height="17" rx="3" fill="#8a8685" stroke="#bdb7b3" stroke-width="1.800"/></svg>
<svg style="left:2900px;top:42px;overflow:hidden" width="58" height="26" viewBox="2900 42 58 26"><rect x="2917" y="49" width="26" height="30" rx="3" fill="none" stroke="#8a8684" stroke-width="2" stroke-linecap="round" stroke-linejoin="round"/><path d="M2921 49V70M2939 49V70" fill="none" stroke="#8a8684" stroke-width="1.4" stroke-linecap="round" stroke-linejoin="round"/><path d="M2922 68L2927 62L2931 65L2935 60L2938 64V70H2922Z" fill="#8a8684" stroke="none"/></svg>
<svg style="left:2960px;top:42px;overflow:hidden" width="58" height="26" viewBox="2960 42 58 26"><path d="M2976 70V64C2976 56 2982 51 2989 51C2996 51 3002 56 3002 64V70" fill="none" stroke="#8a8684" stroke-width="2" stroke-linecap="round" stroke-linejoin="round"/><path d="M2979 58L2984 62V66H2994V62L2999 58" fill="none" stroke="#8a8684" stroke-width="2" stroke-linecap="round" stroke-linejoin="round"/></svg>
<svg style="left:3020px;top:42px;overflow:hidden" width="58" height="26" viewBox="3020 42 58 26"><circle cx="3049" cy="63" r="14" fill="none" stroke="#8a8684" stroke-width="1.8" stroke-linecap="round" stroke-linejoin="round"/><circle cx="3049" cy="55.500" r="2.200" fill="#8a8684" stroke="none"/><path d="M3049 61.500V70" fill="none" stroke="#8a8684" stroke-width="3.2" stroke-linecap="round" stroke-linejoin="round"/></svg>
<svg style="left:2683px;top:901px" width="677" height="90" viewBox="2683 901 677 90"><rect x="2692" y="916" width="365" height="23" fill="#505050"/><path d="M2692 939L3031 916H3057V939Z" fill="#2f2f2f"/><rect x="2692.5" y="916.5" width="364" height="22" fill="none" stroke="#a19d9a" stroke-width="1"/><rect x="2692" y="957" width="365" height="23" fill="#505050"/><path d="M2692 957C2750 962 2791 980 2823 980C2874 980 2885 957 2933 957C2984 957 3020 973 3057 980H2692Z" fill="#2f2f2f"/><rect x="2692.5" y="957.5" width="364" height="22" fill="none" stroke="#a19d9a" stroke-width="1"/><rect x="2904.500" y="908.500" width="7" height="39" rx="1" fill="#6f6d6b" stroke="#9a9794"/><rect x="2872.500" y="948.500" width="7" height="39" rx="1" fill="#6f6d6b" stroke="#9a9794"/><circle cx="3169.7" cy="927.800" r="13.300" fill="none" stroke="#bdb7b3" stroke-width="1.8" stroke-linecap="round" stroke-linejoin="round"/><circle cx="3209.7" cy="927.800" r="13.300" fill="none" stroke="#bdb7b3" stroke-width="1.8" stroke-linecap="round" stroke-linejoin="round"/><circle cx="3249.9" cy="927.800" r="13.300" fill="none" stroke="#bdb7b3" stroke-width="1.8" stroke-linecap="round" stroke-linejoin="round"/><path d="M3162 927.800H3177.500M3202 927.800H3217.500M3209.700 920V935.500" fill="none" stroke="#bdb7b3" stroke-width="1.8" stroke-linecap="round" stroke-linejoin="round"/><rect x="3243.500" y="921.400" width="12.800" height="12.800" rx="2" fill="#bdb7b3" stroke="none"/><path d="M3275 910V948M3275 952V986" stroke="#6e6c6b" stroke-width="1.400" stroke-dasharray="1 1"/><rect x="3278" y="908" width="40" height="40" rx="4" fill="#5f6d8c"/><rect x="3286" y="915" width="17" height="17" rx="3" fill="none" stroke="#bdb7b3" stroke-width="2" stroke-linecap="round" stroke-linejoin="round"/><rect x="3294.500" y="924" width="17" height="17" rx="3" fill="#5f6d8c" stroke="#bdb7b3" stroke-width="2"/><path d="M3290.500 919.500L3307 936.500M3290.500 925V919.500H3296M3307 931V936.500H3301.500" fill="none" stroke="#bdb7b3" stroke-width="1.8" stroke-linecap="round" stroke-linejoin="round"/><rect x="3327" y="917" width="22" height="22" rx="3.500" fill="none" stroke="#bdb7b3" stroke-width="1.8" stroke-linecap="round" stroke-linejoin="round"/><path d="M3332 922L3344 934M3332 927.500V922H3337.500M3344 928.500V934H3338.500" fill="none" stroke="#bdb7b3" stroke-width="1.8" stroke-linecap="round" stroke-linejoin="round"/><path d="M3160 970A10.500 10.500 0 1 1 3172 978.500" fill="none" stroke="#bdb7b3" stroke-width="1.8" stroke-linecap="round" stroke-linejoin="round"/><path d="M3155 966L3166 966.500L3160.500 976Z" fill="#bdb7b3" stroke="none"/><path d="M3219.500 970A10.500 10.500 0 1 0 3207.500 978.500" fill="none" stroke="#bdb7b3" stroke-width="1.8" stroke-linecap="round" stroke-linejoin="round"/><path d="M3224.500 966L3213.500 966.500L3219 976Z" fill="#bdb7b3" stroke="none"/><path d="M3249.900 956.500V968" fill="none" stroke="#bdb7b3" stroke-width="1.8" stroke-linecap="round" stroke-linejoin="round"/><path d="M3243 958.500A12 12 0 1 0 3256.800 958.500" fill="none" stroke="#bdb7b3" stroke-width="1.8" stroke-linecap="round" stroke-linejoin="round"/><path d="M3238.500 964L3242.500 958.800" fill="none" stroke="#bdb7b3" stroke-width="1.6" stroke-linecap="round" stroke-linejoin="round" stroke-dasharray="1 1.800"/><circle cx="3249.900" cy="968.500" r="3.200" fill="#bdb7b3" stroke="none"/><path d="M3298 955V983" fill="none" stroke="#bdb7b3" stroke-width="1.6" stroke-linecap="round" stroke-linejoin="round"/><path d="M3285 960V978L3294 969Z" fill="none" stroke="#bdb7b3" stroke-width="1.6" stroke-linecap="round" stroke-linejoin="round"/><path d="M3311 960V978L3302 969Z" fill="#bdb7b3" stroke="none" stroke="#bdb7b3" stroke-width="1.600" stroke-linejoin="round"/><path d="M3325 969H3351" fill="none" stroke="#bdb7b3" stroke-width="1.6" stroke-linecap="round" stroke-linejoin="round"/><path d="M3329 955H3347L3338 965Z" fill="#bdb7b3" stroke="none" stroke="#bdb7b3" stroke-width="1.600" stroke-linejoin="round"/><path d="M3330 983H3346L3338 974Z" fill="none" stroke="#bdb7b3" stroke-width="1.6" stroke-linecap="round" stroke-linejoin="round"/></svg>
<div class="t" style="left:3096px;top:918.500px;font-size:21.500px;letter-spacing:-.4px">104.5</div>
<div class="t" style="left:3120px;top:958.500px;font-size:21.500px;letter-spacing:-.4px">0.0</div>
<svg style="left:2683px;top:990px" width="677" height="50" viewBox="2683 990 677 50"><path d="M2794.500 1012.500L2807.500 1004.500L2820.500 1012.500L2807.500 1020.500Z" fill="none" stroke="#bdb7b3" stroke-width="1.8" stroke-linecap="round" stroke-linejoin="round"/><path d="M2795 1019.500L2807.500 1027L2820 1019.500M2795 1026L2807.500 1033.500L2820 1026" fill="none" stroke="#bdb7b3" stroke-width="1.8" stroke-linecap="round" stroke-linejoin="round"/></svg>
<svg style="left:2720px;top:998px;overflow:hidden" width="58" height="26" viewBox="2720 998 58 26"><path d="M2759 1006L2742 1023" stroke="#8a8684" stroke-width="7.500" stroke-linecap="round"/><circle cx="2756" cy="1027" r="6" fill="none" stroke="#8a8684" stroke-width="1.6" stroke-linecap="round" stroke-linejoin="round"/><circle cx="2756" cy="1027" r="2.500" fill="none" stroke="#8a8684" stroke-width="1.4" stroke-linecap="round" stroke-linejoin="round"/></svg>
<svg style="left:2922px;top:998px;overflow:hidden" width="58" height="26" viewBox="2922 998 58 26"><circle cx="2955" cy="1021" r="12" fill="none" stroke="#8a8684" stroke-width="1.8" stroke-linecap="round" stroke-linejoin="round"/><path d="M2947 1012L2941 1030H2962Z" fill="#8a8684" stroke="none"/></svg>
<svg style="left:2982px;top:998px;overflow:hidden" width="58" height="26" viewBox="2982 998 58 26"><path d="M3000 1014L3013 1006L3026 1014L3013 1022Z" fill="none" stroke="#8a8684" stroke-width="1.8" stroke-linecap="round" stroke-linejoin="round"/><path d="M3001 1021L3009 1026" fill="none" stroke="#8a8684" stroke-width="1.8" stroke-linecap="round" stroke-linejoin="round"/><circle cx="3019" cy="1027" r="3" fill="none" stroke="#8a8684" stroke-width="1.4" stroke-linecap="round" stroke-linejoin="round"/><circle cx="3026" cy="1027" r="2" fill="none" stroke="#8a8684" stroke-width="1.2" stroke-linecap="round" stroke-linejoin="round"/></svg>
<svg style="left:3042px;top:998px;overflow:hidden" width="58" height="26" viewBox="3042 998 58 26"><path d="M3060 1014L3073 1006L3086 1014L3073 1022Z" fill="none" stroke="#8a8684" stroke-width="1.8" stroke-linecap="round" stroke-linejoin="round"/><path d="M3061 1021L3069 1026" fill="none" stroke="#8a8684" stroke-width="1.8" stroke-linecap="round" stroke-linejoin="round"/><path d="M3074 1022H3090L3082 1031Z" fill="#8a8684" stroke="none"/></svg>
<svg style="left:3102px;top:998px;overflow:hidden" width="58" height="26" viewBox="3102 998 58 26"><path d="M3130 1006H3140Q3149 1006 3149 1014.500Q3149 1023 3140 1023H3122" fill="none" stroke="#8a8684" stroke-width="2" stroke-linecap="round" stroke-linejoin="round"/><path d="M3120 1006L3130 999.500V1012.500Z" fill="#8a8684" stroke="none"/><path d="M3122 1028V1023" fill="none" stroke="#8a8684" stroke-width="2" stroke-linecap="round" stroke-linejoin="round"/></svg>
<svg style="left:3162px;top:998px;overflow:hidden" width="58" height="26" viewBox="3162 998 58 26"><path d="M3178 1030V1010H3204V1030" fill="none" stroke="#8a8684" stroke-width="2" stroke-linecap="round" stroke-linejoin="round"/><path d="M3177 1009L3203 1001L3204 1005L3178 1013Z" fill="#8a8684" stroke="none"/><path d="M3180 1010.500H3203" stroke="#4f4f4f" stroke-width="3" stroke-dasharray="2.500 2.500"/><path d="M3189 1017L3196 1022L3189 1027Z" fill="#8a8684" stroke="none"/></svg>
<svg style="left:2683px;top:1026px" width="677" height="100" viewBox="2683 1026 677 100"><rect x="2693.500" y="1043.500" width="29" height="25" rx="5" fill="none" stroke="#d6d2ce" stroke-width="2.2" stroke-linecap="round" stroke-linejoin="round"/><path d="M2740 1053L2747 1047L2754 1053M2740 1061L2747 1067L2754 1061" fill="none" stroke="#d0ccc8" stroke-width="1.5" stroke-linecap="round" stroke-linejoin="round"/><path d="M2997.6 1053L3004.6 1047L3011.6 1053M2997.6 1061L3004.6 1067L3011.6 1061" fill="none" stroke="#d0ccc8" stroke-width="1.5" stroke-linecap="round" stroke-linejoin="round"/><path d="M3335.4 1050L3342.4 1044L3349.4 1050M3335.4 1062L3342.4 1068L3349.4 1062" fill="none" stroke="#d0ccc8" stroke-width="1.5" stroke-linecap="round" stroke-linejoin="round"/><rect x="3032.0" y="1047.0" width="8.500" height="8.500" fill="#f2f0ee"/><rect x="3032.0" y="1055.4" width="8.500" height="8.500" fill="#b4aeab"/><rect x="3040.4" y="1047.0" width="8.500" height="8.500" fill="#b4aeab"/><rect x="3040.4" y="1055.4" width="8.500" height="8.500" fill="#f2f0ee"/><rect x="3048.7" y="1047.0" width="8.500" height="8.500" fill="#f2f0ee"/><rect x="3048.7" y="1055.4" width="8.500" height="8.500" fill="#b4aeab"/><rect x="3057.1" y="1047.0" width="8.500" height="8.500" fill="#b4aeab"/><rect x="3057.1" y="1055.4" width="8.500" height="8.500" fill="#f2f0ee"/><rect x="3065.5" y="1047.0" width="8.500" height="8.500" fill="#f2f0ee"/><rect x="3065.5" y="1055.4" width="8.500" height="8.500" fill="#b4aeab"/><rect x="3073.8" y="1047.0" width="8.500" height="8.500" fill="#b4aeab"/><rect x="3073.8" y="1055.4" width="8.500" height="8.500" fill="#f2f0ee"/><rect x="3082.2" y="1047.0" width="8.500" height="8.500" fill="#f2f0ee"/><rect x="3082.2" y="1055.4" width="8.500" height="8.500" fill="#b4aeab"/><rect x="3090.6" y="1047.0" width="8.500" height="8.500" fill="#b4aeab"/><rect x="3090.6" y="1055.4" width="8.500" height="8.500" fill="#f2f0ee"/><rect x="3099.0" y="1047.0" width="8.500" height="8.500" fill="#f0edeb"/><rect x="3099.0" y="1055.4" width="8.500" height="8.500" fill="#b5afac"/><rect x="3107.3" y="1047.0" width="8.500" height="8.500" fill="#b6b0ad"/><rect x="3107.3" y="1055.4" width="8.500" height="8.500" fill="#eeebe9"/><rect x="3115.7" y="1047.0" width="8.500" height="8.500" fill="#ece9e7"/><rect x="3115.7" y="1055.4" width="8.500" height="8.500" fill="#b7b1ae"/><rect x="3124.1" y="1047.0" width="8.500" height="8.500" fill="#b8b2af"/><rect x="3124.1" y="1055.4" width="8.500" height="8.500" fill="#eae7e5"/><rect x="3132.4" y="1047.0" width="8.500" height="8.500" fill="#e8e5e3"/><rect x="3132.4" y="1055.4" width="8.500" height="8.500" fill="#b9b3b0"/><rect x="3140.8" y="1047.0" width="8.500" height="8.500" fill="#bab4b1"/><rect x="3140.8" y="1055.4" width="8.500" height="8.500" fill="#e6e3e1"/><rect x="3149.2" y="1047.0" width="8.500" height="8.500" fill="#e4e1df"/><rect x="3149.2" y="1055.4" width="8.500" height="8.500" fill="#bbb5b2"/><rect x="3157.6" y="1047.0" width="8.500" height="8.500" fill="#bcb6b3"/><rect x="3157.6" y="1055.4" width="8.500" height="8.500" fill="#e2dfdc"/><rect x="3165.9" y="1047.0" width="8.500" height="8.500" fill="#e0ddda"/><rect x="3165.9" y="1055.4" width="8.500" height="8.500" fill="#bdb7b4"/><rect x="3174.3" y="1047.0" width="8.500" height="8.500" fill="#beb8b5"/><rect x="3174.3" y="1055.4" width="8.500" height="8.500" fill="#dedbd8"/><rect x="3182.7" y="1047.0" width="8.500" height="8.500" fill="#ddd9d6"/><rect x="3182.7" y="1055.4" width="8.500" height="8.500" fill="#bfbab6"/><rect x="3191.0" y="1047.0" width="8.500" height="8.500" fill="#c0bbb7"/><rect x="3191.0" y="1055.4" width="8.500" height="8.500" fill="#dbd7d4"/><rect x="3199.4" y="1047.0" width="8.500" height="8.500" fill="#d9d5d2"/><rect x="3199.4" y="1055.4" width="8.500" height="8.500" fill="#c1bcb8"/><rect x="3207.8" y="1047.0" width="8.500" height="8.500" fill="#c2bdb9"/><rect x="3207.8" y="1055.4" width="8.500" height="8.500" fill="#d7d3d0"/><rect x="3216.1" y="1047.0" width="8.500" height="8.500" fill="#d5d1cd"/><rect x="3216.1" y="1055.4" width="8.500" height="8.500" fill="#c3beba"/><rect x="3224.5" y="1047.0" width="8.500" height="8.500" fill="#c4bfbb"/><rect x="3224.5" y="1055.4" width="8.500" height="8.500" fill="#d3cfcb"/><rect x="3232.9" y="1047.0" width="8.500" height="8.500" fill="#d1cdc9"/><rect x="3232.9" y="1055.4" width="8.500" height="8.500" fill="#c5c0bc"/><rect x="3241.2" y="1047.0" width="8.500" height="8.500" fill="#c6c1bd"/><rect x="3241.2" y="1055.4" width="8.500" height="8.500" fill="#cfcbc7"/><rect x="3249.6" y="1047.0" width="8.500" height="8.500" fill="#cdc9c5"/><rect x="3249.6" y="1055.4" width="8.500" height="8.500" fill="#c7c2be"/><rect x="3258.0" y="1047.0" width="8.500" height="8.500" fill="#c8c3bf"/><rect x="3258.0" y="1055.4" width="8.500" height="8.500" fill="#cbc7c3"/><rect x="3266.4" y="1047.0" width="8.500" height="8.500" fill="#cac5c1"/><rect x="3266.4" y="1055.4" width="8.500" height="8.500" fill="#cac5c1"/><rect x="3274.500" y="1036.500" width="6.500" height="38.500" rx="1" fill="#6f6d6b" stroke="#8a8785"/><rect x="2945" y="1092" width="19" height="19" rx="4" fill="#8a8684"/><rect x="2951.500" y="1085" width="19.500" height="19.500" rx="4" fill="#bdb7b3"/><rect x="2951.500" y="1085" width="19.500" height="19.500" rx="4" fill="none" stroke="#e0dcd8" stroke-width="1.600" stroke-dasharray="4 2.500"/><path d="M2994 1098L2992 1112H3004L3002 1098Z" fill="#bdb7b3" stroke="none"/><rect x="2994.500" y="1089" width="7" height="7.500" fill="none" stroke="#bdb7b3" stroke-width="1.600"/><path d="M2993 1088.500L2998 1084.500L3003 1088.500Z" fill="#bdb7b3" stroke="none"/><path d="M2984.500 1087L2993 1091M2984.500 1097.500L2993 1094.500M3011.500 1087L3003 1091M3011.500 1097.500L3003 1094.500" fill="none" stroke="#bdb7b3" stroke-width="1.8" stroke-linecap="round" stroke-linejoin="round"/><path d="M3027.500 1085.500H3042.500L3038.500 1108H3031.500Z" fill="none" stroke="#bdb7b3" stroke-width="1.8" stroke-linecap="round" stroke-linejoin="round"/><path d="M3032 1092.500C3032 1090 3035 1090 3035 1092.500C3035 1090 3038 1090 3038 1092.500C3038 1095.500 3035 1097 3035 1099C3035 1097 3032 1095.500 3032 1092.500Z" fill="#bdb7b3" stroke="none"/><path d="M3031.500 1109.500H3040C3044 1109.500 3041 1103 3045 1103.500C3048 1104 3049 1106 3051 1108.500" fill="none" stroke="#bdb7b3" stroke-width="1.8" stroke-linecap="round" stroke-linejoin="round"/><rect x="3068" y="1097" width="20" height="16" rx="3" fill="#bdb7b3" stroke="none"/><path d="M3072.500 1097V1092.500C3072.500 1083.500 3083.500 1083.500 3083.500 1092.500V1097" fill="none" stroke="#bdb7b3" stroke-width="2.4" stroke-linecap="round" stroke-linejoin="round"/><rect x="3110" y="1084" width="8" height="8" fill="#7a7674"/><rect x="3110" y="1100" width="8" height="8" fill="#7a7674"/><rect x="3118" y="1092" width="8" height="8" fill="#7a7674"/><rect x="3126" y="1084" width="8" height="8" fill="#7a7674"/><rect x="3126" y="1100" width="8" height="8" fill="#7a7674"/><rect x="3105" y="1100" width="14" height="12" rx="2" fill="#85817f"/><path d="M3108 1100V1097C3108 1091.500 3116 1091.500 3116 1097V1100" fill="none" stroke="#85817f" stroke-width="2" stroke-linecap="round" stroke-linejoin="round"/><rect x="3141" y="1080" width="40" height="36" fill="#585858"/><rect x="3148" y="1085" width="24" height="24" fill="#7d7977"/><circle cx="3160" cy="1097" r="7.500" fill="#585858"/><path d="M3163 1101L3177 1113M3177 1101L3163 1113" fill="none" stroke="#85817f" stroke-width="2.6" stroke-linecap="round" stroke-linejoin="round"/><path d="M3188.8 1093L3194.8 1087L3200.8 1093M3188.8 1103L3194.8 1109L3200.8 1103" fill="none" stroke="#8a8684" stroke-width="1.5" stroke-linecap="round" stroke-linejoin="round"/><rect x="3213" y="1080" width="42" height="36" fill="#585858"/><path d="M3220 1109V1086H3246L3222 1110Z" fill="#7d7977"/><path d="M3226 1092V1102L3236 1092Z" fill="#585858"/><path d="M3238 1101L3252 1113M3252 1101L3238 1113" fill="none" stroke="#85817f" stroke-width="2.6" stroke-linecap="round" stroke-linejoin="round"/><path d="M3262.8 1093L3268.8 1087L3274.8 1093M3262.8 1103L3268.8 1109L3274.8 1103" fill="none" stroke="#8a8684" stroke-width="1.5" stroke-linecap="round" stroke-linejoin="round"/><rect x="3287" y="1079.500" width="70.500" height="37.500" rx="4" fill="#686866" stroke="#8d8a88"/><rect x="3303" y="1093" width="18" height="18" fill="#fff" stroke="#b9b3af" stroke-width="2"/><rect x="3295" y="1085" width="18" height="18" fill="#4a8fe0" stroke="#b9b3af" stroke-width="2"/><path d="M3335.4 1093L3342.4 1087L3349.4 1093M3335.4 1103L3342.4 1109L3349.4 1103" fill="none" stroke="#d0ccc8" stroke-width="1.5" stroke-linecap="round" stroke-linejoin="round"/></svg>
<svg style="left:2683px;top:1126px" width="677" height="200" viewBox="2683 1126 677 200"><path d="M2688.5 1157C2693.5 1149 2709.5 1149 2714.5 1157" fill="none" stroke="#bdb7b3" stroke-width="1.8" stroke-linecap="round" stroke-linejoin="round"/><path d="M2688.5 1158C2693.5 1152 2709.5 1152 2714.5 1158" fill="none" stroke="#bdb7b3" stroke-width="1.2" stroke-linecap="round" stroke-linejoin="round"/><ellipse cx="2701.5" cy="1158" rx="5.200" ry="5.800" fill="#bdb7b3" stroke="none"/><path d="M2688.5 1222C2693.5 1214 2709.5 1214 2714.5 1222" fill="none" stroke="#bdb7b3" stroke-width="1.8" stroke-linecap="round" stroke-linejoin="round"/><path d="M2688.5 1223C2693.5 1217 2709.5 1217 2714.5 1223" fill="none" stroke="#bdb7b3" stroke-width="1.2" stroke-linecap="round" stroke-linejoin="round"/><ellipse cx="2701.5" cy="1223" rx="5.200" ry="5.800" fill="#bdb7b3" stroke="none"/><path d="M2688.5 1288C2693.5 1280 2709.5 1280 2714.5 1288" fill="none" stroke="#bdb7b3" stroke-width="1.8" stroke-linecap="round" stroke-linejoin="round"/><path d="M2688.5 1289C2693.5 1283 2709.5 1283 2714.5 1289" fill="none" stroke="#bdb7b3" stroke-width="1.2" stroke-linecap="round" stroke-linejoin="round"/><ellipse cx="2701.5" cy="1289" rx="5.200" ry="5.800" fill="#bdb7b3" stroke="none"/><path d="M2749.500 1145L2735.500 1159" stroke="#bdb7b3" stroke-width="5.500" stroke-linecap="butt"/><path d="M2728 1168.500L2730.500 1160.500L2736 1166Z" fill="#bdb7b3" stroke="none"/><path d="M2725 1171H2751" fill="none" stroke="#bdb7b3" stroke-width="1.6" stroke-linecap="round" stroke-linejoin="round"/><rect x="2732.500" y="1212.5" width="18" height="18" rx="3.500" fill="none" stroke="#2f2f2f" stroke-width="1.6" stroke-linecap="round" stroke-linejoin="round"/><rect x="2732.500" y="1278.5" width="18" height="18" rx="3.500" fill="none" stroke="#2f2f2f" stroke-width="1.6" stroke-linecap="round" stroke-linejoin="round"/><path d="M2774 1151L2781 1158L2774 1165" fill="none" stroke="#bdb7b3" stroke-width="1.6" stroke-linecap="round" stroke-linejoin="round"/><path d="M2795.500 1168V1148.5Q2795.500 1146.5 2797.500 1146.5H2805L2808 1150H2821.500Q2823.500 1150 2823.500 1152V1166Q2823.500 1168 2821.500 1168Z" fill="#bdb7b3" stroke="none"/><path d="M2796 1151.5H2823" stroke="#5f6d8c" stroke-width="1"/><path d="M2774 1216L2781 1223L2774 1230" fill="none" stroke="#bdb7b3" stroke-width="1.6" stroke-linecap="round" stroke-linejoin="round"/><path d="M2795.500 1233V1213.5Q2795.500 1211.5 2797.500 1211.5H2805L2808 1215H2821.500Q2823.500 1215 2823.500 1217V1231Q2823.500 1233 2821.500 1233Z" fill="#bdb7b3" stroke="none"/><path d="M2796 1216.5H2823" stroke="#404040" stroke-width="1"/><path d="M2871 1273H2888Q2890 1273 2890 1275V1292Q2890 1294 2888 1294H2879L2871 1286Z" fill="none" stroke="#333" stroke-width="2" stroke-linecap="round" stroke-linejoin="round"/><path d="M2871 1286H2877Q2879 1286 2879 1288V1294Z" fill="#333"/></svg>
<svg style="left:2683px;top:1913px" width="677" height="52" viewBox="2683 1913 677 52"><rect x="2690.500" y="1932.500" width="25" height="23" rx="3" fill="none" stroke="#bdb7b3" stroke-width="1.8" stroke-linecap="round" stroke-linejoin="round"/><path d="M2691 1944H2715M2695 1938.500H2700M2695 1950H2700" fill="none" stroke="#bdb7b3" stroke-width="1.8" stroke-linecap="round" stroke-linejoin="round"/><path d="M3064 1957H3052L3044.500 1950V1934Q3044.500 1931.500 3047 1931.500H3069Q3071.500 1931.500 3071.500 1934V1948" fill="none" stroke="#bdb7b3" stroke-width="1.8" stroke-linecap="round" stroke-linejoin="round"/><path d="M3044.500 1950H3050Q3052 1950 3052 1952V1957" fill="none" stroke="#bdb7b3" stroke-width="1.4" stroke-linecap="round" stroke-linejoin="round"/><circle cx="3069" cy="1954.5" r="6.800" fill="#bdb7b3" stroke="#4c4c4c" stroke-width="1.200"/><path d="M3065 1954.5H3073M3069 1950.5V1958.5" stroke="#4c4c4c" stroke-width="1.600"/><path d="M3104 1957H3092L3084.500 1950V1934Q3084.500 1931.500 3087 1931.500H3109Q3111.500 1931.500 3111.500 1934V1948" fill="none" stroke="#bdb7b3" stroke-width="1.8" stroke-linecap="round" stroke-linejoin="round"/><path d="M3084.500 1950H3090Q3092 1950 3092 1952V1957" fill="none" stroke="#bdb7b3" stroke-width="1.4" stroke-linecap="round" stroke-linejoin="round"/><path d="M3098 1936.500L3105 1940.500V1948L3098 1952L3091 1948V1940.500ZM3091 1940.500L3098 1944.500L3105 1940.500M3098 1944.500V1952" fill="none" stroke="#bdb7b3" stroke-width="1.4" stroke-linecap="round" stroke-linejoin="round"/><circle cx="3109" cy="1954.5" r="6.800" fill="#bdb7b3" stroke="#4c4c4c" stroke-width="1.200"/><path d="M3105 1954.5H3113M3109 1950.5V1958.5" stroke="#4c4c4c" stroke-width="1.600"/><path d="M3122.500 1954V1934.500Q3122.500 1932.500 3124.500 1932.500H3132L3135 1936H3148.500Q3150.500 1936 3150.500 1938V1952Q3150.500 1954 3148.500 1954Z" fill="#bdb7b3" stroke="none"/><circle cx="3149" cy="1954.5" r="6.800" fill="#bdb7b3" stroke="#4c4c4c" stroke-width="1.200"/><path d="M3145 1954.5H3153M3149 1950.5V1958.5" stroke="#4c4c4c" stroke-width="1.600"/><g opacity=".8"><rect x="3176.500" y="1929.500" width="16" height="15" rx="2.500" fill="none" stroke="#8a8684" stroke-width="1.5" stroke-linecap="round" stroke-linejoin="round" stroke-dasharray="3 2"/><rect x="3163.500" y="1941.500" width="17" height="16" rx="2.500" fill="none" stroke="#8a8684" stroke-width="1.5" stroke-linecap="round" stroke-linejoin="round" stroke-dasharray="3 2"/><path d="M3186 1946V1950Q3186 1952 3184 1952H3171M3174.500 1948.500L3171 1952L3174.500 1955.500" fill="none" stroke="#8a8684" stroke-width="1.5" stroke-linecap="round" stroke-linejoin="round"/><rect x="3182" y="1934" width="6" height="6" fill="#8a8684"/></g><g opacity=".8"><rect x="3216.500" y="1929.500" width="16" height="15" rx="2.500" fill="none" stroke="#8a8684" stroke-width="1.5" stroke-linecap="round" stroke-linejoin="round" stroke-dasharray="3 2"/><rect x="3203.500" y="1941.500" width="17" height="16" rx="2.500" fill="none" stroke="#8a8684" stroke-width="1.5" stroke-linecap="round" stroke-linejoin="round" stroke-dasharray="3 2"/><path d="M3222 1940L3209 1953M3209 1947.500V1953H3214.500" fill="none" stroke="#8a8684" stroke-width="1.5" stroke-linecap="round" stroke-linejoin="round"/></g><rect x="3244" y="1930.500" width="28" height="28" rx="4" fill="#bdb7b3" stroke="none"/><circle cx="3258" cy="1944.500" r="7.500" fill="#4c4c4c"/><g opacity=".8"><rect x="3283.500" y="1931.500" width="26" height="25" rx="3" fill="none" stroke="#8a8684" stroke-width="1.5" stroke-linecap="round" stroke-linejoin="round" stroke-dasharray="3 2"/><rect x="3298" y="1940" width="18" height="18" rx="3" fill="#8a8684"/><circle cx="3307" cy="1949" r="5" fill="#4c4c4c"/><path d="M3297 1945H3288M3291 1942L3288 1945L3291 1948" fill="none" stroke="#8a8684" stroke-width="1.5" stroke-linecap="round" stroke-linejoin="round"/></g><path d="M3326.500 1936H3349.500M3334 1935.500V1932H3342V1935.500M3329 1936L3330.500 1955Q3330.700 1957 3332.700 1957H3343.300Q3345.300 1957 3345.500 1955L3347 1936" fill="none" stroke="#bdb7b3" stroke-width="1.8" stroke-linecap="round" stroke-linejoin="round"/><path d="M3334 1940.500V1953M3338 1940.500V1953M3342 1940.500V1953" fill="none" stroke="#bdb7b3" stroke-width="1.5" stroke-linecap="round" stroke-linejoin="round"/><path d="M3004 1918.500H3039" stroke="#d8d4d0" stroke-width="1.400" stroke-dasharray="1.400 6.600"/></svg>
<svg style="left:0;top:0" width="3360" height="1970" viewBox="0 0 3360 1970">
<defs><g id="lineart" fill="none" stroke-linecap="round" stroke-linejoin="round">
<path d="M1435 510C1434 507 1430 499 1428 493C1426 487 1425 480 1423 474C1422 468 1420 460 1419 457M1419 457C1417 457 1410 458 1404 459C1398 461 1391 464 1385 467C1379 471 1373 476 1368 481C1363 487 1358 494 1355 501C1352 507 1350 514 1349 520C1348 526 1347 531 1347 537C1347 542 1350 550 1350 553M1326 632C1327 629 1326 621 1327 614C1328 608 1330 599 1333 592C1335 585 1339 579 1343 571C1348 564 1353 556 1360 549C1366 542 1375 536 1382 531C1389 526 1397 521 1400 519M1327 614C1327 617 1327 626 1326 631C1326 636 1324 639 1322 644C1320 648 1317 653 1314 658C1312 662 1309 667 1307 671C1305 676 1303 679 1302 684C1300 689 1300 694 1299 699C1299 704 1300 709 1300 714C1300 720 1300 726 1301 731C1301 736 1301 739 1302 742C1302 745 1303 748 1305 749C1307 751 1308 751 1312 752C1317 754 1326 756 1333 758C1341 759 1348 761 1356 761C1363 762 1371 761 1378 761C1384 760 1389 760 1394 758C1399 757 1406 754 1408 753M1442 540C1438 542 1429 546 1422 551C1415 555 1407 561 1401 568C1394 574 1386 583 1381 590C1376 597 1373 605 1370 612C1367 619 1366 626 1366 631C1365 636 1366 641 1367 643M1429 532C1425 534 1414 536 1406 539C1398 542 1390 546 1383 551C1376 555 1370 561 1364 567C1359 574 1352 583 1348 590C1343 597 1340 603 1337 609C1333 615 1330 623 1328 626M1394 565C1393 567 1387 573 1383 579C1380 584 1376 591 1373 598C1370 605 1366 615 1364 621C1363 627 1362 632 1362 634M1439 543C1437 546 1430 553 1426 559C1421 565 1418 572 1414 579C1411 586 1408 594 1406 601C1404 609 1402 617 1402 623C1401 630 1402 634 1403 640C1404 646 1406 652 1408 657C1410 662 1412 666 1414 671C1416 675 1417 680 1420 684C1423 689 1429 696 1431 698M1417 607C1416 609 1414 615 1413 621C1412 626 1411 631 1412 637C1412 643 1414 653 1414 657M1309 753C1306 756 1298 764 1292 770C1285 776 1276 782 1269 787C1263 792 1256 798 1254 800M1319 753C1319 756 1322 764 1322 770C1323 776 1321 784 1321 789C1320 794 1319 798 1319 800M1292 791L1282 800M1590 553C1590 551 1588 543 1589 537C1589 531 1591 523 1593 517C1596 511 1600 506 1604 501C1609 495 1615 490 1619 487C1624 483 1630 481 1633 479C1637 477 1641 477 1642 476M1642 476C1643 479 1646 486 1648 492C1650 499 1653 508 1656 514C1658 521 1660 528 1664 534C1668 540 1677 547 1679 549M1679 549C1678 552 1676 559 1672 564C1669 570 1663 578 1658 584C1654 590 1649 597 1644 601C1640 604 1635 604 1633 605M1642 476C1643 481 1645 495 1644 503C1644 512 1642 519 1640 526C1638 532 1635 537 1633 542C1632 548 1631 553 1631 559C1630 564 1632 571 1633 576C1634 580 1636 583 1636 587C1636 590 1635 595 1635 598C1634 601 1634 604 1633 605M1660 526C1663 525 1671 523 1678 523C1684 522 1693 522 1700 522C1707 523 1715 524 1722 526C1730 527 1738 530 1744 532C1751 534 1756 537 1762 540C1768 543 1774 547 1781 552C1787 558 1796 568 1802 574C1807 580 1810 583 1813 589C1816 594 1819 600 1821 605C1824 610 1826 616 1828 621C1829 627 1831 634 1831 638C1832 641 1833 641 1833 642M1757 552C1758 553 1763 554 1766 555C1769 555 1774 554 1775 554M1761 542C1761 544 1764 549 1765 552C1767 555 1769 558 1770 559M1802 574C1804 574 1808 575 1813 576C1818 576 1824 575 1829 575C1835 575 1840 574 1846 574C1852 573 1862 573 1865 573M1865 573C1866 574 1868 575 1869 578C1870 581 1871 588 1871 593C1872 598 1871 604 1870 609C1869 614 1867 619 1865 624C1863 628 1860 631 1857 634C1854 637 1850 640 1846 643C1841 646 1835 649 1832 650M1692 571C1688 573 1678 580 1672 587C1667 593 1662 600 1658 609C1654 618 1650 634 1648 639M1724 601C1721 603 1711 610 1706 614C1700 619 1694 624 1689 628C1684 633 1679 638 1677 640M1719 629L1709 640M1749 616C1747 619 1744 630 1742 634C1740 638 1738 639 1738 640M1764 614L1758 640M1768 614L1765 640M1790 614L1791 640M1606 681C1606 684 1607 691 1608 698C1610 704 1612 714 1614 720C1616 726 1618 733 1622 737C1627 741 1637 743 1640 744M1606 752L1617 726M1606 752L1611 739L1622 727M1617 726C1618 729 1621 740 1625 748C1629 755 1634 763 1639 770C1644 777 1650 787 1653 792C1656 797 1657 799 1658 800M1588 784C1590 786 1597 792 1600 795C1603 798 1605 799 1606 800M1593 706C1594 708 1596 712 1596 714C1596 717 1595 721 1594 723"/>
<path stroke-opacity=".45" d="M1417 530C1414 531 1402 535 1395 538C1388 541 1383 544 1378 548C1372 552 1366 559 1363 561"/>
<path d="M1283 800C1281 802 1272 807 1267 811C1261 815 1255 820 1250 825C1245 830 1242 835 1239 842C1236 848 1234 857 1233 864C1232 871 1232 877 1233 883C1235 890 1240 901 1242 904M1319 800C1319 804 1316 814 1314 822C1312 830 1309 838 1307 847C1304 856 1301 869 1299 875C1296 881 1294 880 1292 883C1289 887 1286 890 1285 894C1283 899 1282 909 1282 912M1283 800C1281 803 1275 810 1272 817C1269 824 1266 833 1264 842C1262 850 1261 858 1261 867C1260 876 1262 891 1262 896M1278 806C1275 808 1263 816 1258 822C1254 828 1252 835 1251 842C1250 849 1251 855 1253 864C1255 873 1261 891 1262 896M1285 896C1277 897 1255 902 1239 906C1223 909 1205 914 1189 919C1173 923 1156 929 1142 933C1127 937 1107 941 1100 943M1189 919C1188 921 1186 929 1186 933C1186 938 1186 944 1187 947C1187 951 1189 953 1189 954M1176 968C1171 970 1154 975 1142 978C1129 981 1107 986 1100 988M1189 1040C1181 1042 1156 1046 1142 1049C1127 1051 1107 1054 1100 1055M1282 912C1281 914 1280 919 1278 922C1276 926 1272 930 1269 933C1266 937 1261 943 1260 944M1282 912C1284 913 1289 916 1292 918C1295 920 1297 922 1300 924C1303 925 1308 926 1311 928C1315 929 1319 931 1321 932M1260 944C1263 944 1272 942 1281 940C1289 939 1299 937 1308 935C1318 933 1329 930 1336 928C1343 927 1346 926 1348 926M1348 926C1339 928 1313 936 1294 940C1276 944 1255 946 1239 949C1223 951 1207 952 1197 954C1187 956 1181 959 1178 960M1178 960C1177 963 1176 971 1176 978C1176 984 1176 993 1178 1000C1179 1007 1181 1015 1183 1022C1186 1029 1188 1035 1192 1042C1195 1048 1203 1058 1206 1061M1206 1061C1209 1059 1217 1056 1225 1051C1233 1046 1244 1038 1253 1031C1262 1023 1271 1014 1281 1006C1290 997 1300 988 1308 981C1317 973 1324 965 1331 958C1337 951 1345 942 1348 939M1206 1061C1205 1064 1202 1074 1201 1081C1200 1087 1199 1094 1199 1100C1200 1106 1201 1113 1203 1119C1205 1125 1207 1130 1211 1136C1215 1142 1223 1147 1225 1156C1227 1164 1225 1181 1225 1189C1225 1196 1225 1198 1225 1200M1206 1061C1208 1063 1215 1069 1219 1075C1224 1081 1229 1088 1233 1094C1238 1101 1242 1108 1244 1114C1247 1120 1249 1126 1250 1131C1251 1135 1250 1138 1250 1139M1250 1139C1251 1134 1253 1117 1256 1106C1258 1094 1262 1083 1267 1072C1271 1061 1277 1050 1283 1039C1289 1028 1296 1018 1303 1008C1309 999 1316 992 1322 983C1329 975 1336 965 1342 958C1347 952 1353 947 1356 944M1250 1139C1255 1139 1269 1139 1278 1139C1287 1140 1295 1141 1303 1142C1310 1144 1316 1145 1322 1148C1328 1150 1334 1154 1339 1158C1344 1162 1348 1168 1351 1172C1355 1177 1359 1182 1361 1185C1364 1188 1366 1190 1367 1191M1367 1191C1367 1190 1367 1186 1368 1183C1369 1181 1372 1176 1375 1175C1378 1174 1380 1175 1383 1178C1387 1181 1393 1192 1394 1194M1394 1194C1397 1193 1405 1190 1411 1188C1418 1185 1423 1182 1433 1181C1444 1180 1467 1182 1474 1182M1474 1182C1472 1179 1466 1170 1464 1164C1461 1158 1459 1152 1458 1144C1457 1137 1457 1131 1457 1119C1457 1108 1458 1092 1458 1078C1459 1064 1459 1049 1460 1036C1460 1023 1461 1006 1461 1000M1348 926C1349 928 1349 934 1351 939C1354 944 1357 950 1361 956C1365 961 1370 968 1375 972C1380 977 1384 980 1389 983C1394 987 1399 990 1406 992C1412 994 1421 995 1428 996C1435 997 1442 996 1447 996C1453 996 1459 995 1461 995M1351 922C1354 920 1361 914 1367 911C1372 908 1378 905 1383 903C1389 902 1394 901 1400 901C1406 900 1416 902 1419 903M1446 892C1447 894 1451 898 1453 903C1454 907 1455 915 1456 919C1456 924 1455 925 1455 931C1455 937 1456 947 1457 956C1458 964 1458 973 1458 981C1459 988 1460 993 1461 1000C1462 1007 1462 1017 1464 1022C1465 1027 1468 1029 1469 1031C1471 1032 1472 1032 1473 1033M1390 800C1391 804 1390 815 1392 822C1393 830 1396 838 1400 844C1404 851 1408 857 1414 864C1419 870 1428 878 1433 883C1439 889 1444 892 1447 896C1451 900 1453 902 1454 906C1456 909 1457 913 1457 917C1457 920 1456 926 1456 928M1428 800C1428 805 1426 819 1426 828C1427 837 1428 847 1431 856C1433 864 1436 871 1439 878C1442 884 1446 892 1447 894M1451 800C1450 805 1447 819 1446 828C1445 837 1444 846 1444 856C1444 865 1444 875 1446 883C1447 892 1452 902 1453 906M1500 800C1499 805 1494 819 1492 828C1490 837 1488 846 1488 856C1487 865 1486 874 1486 883C1486 893 1486 902 1487 911C1487 920 1489 932 1489 936M1585 800C1585 805 1584 819 1585 828C1585 836 1588 843 1589 850C1590 857 1592 866 1592 872C1592 879 1591 883 1589 889C1587 895 1582 902 1578 908C1573 914 1567 920 1561 925C1556 930 1550 933 1544 936C1539 939 1532 941 1529 942M1529 942C1529 944 1528 950 1528 956C1528 961 1528 967 1529 972C1530 978 1533 986 1533 989M1533 989C1531 987 1525 982 1522 978C1519 973 1518 966 1517 961C1516 956 1515 953 1515 950C1516 947 1518 943 1518 942M1518 942C1517 944 1513 950 1511 956C1509 961 1508 966 1508 972C1508 978 1509 986 1511 992C1513 997 1517 1003 1518 1005M1518 1005C1516 1004 1511 1001 1508 997C1505 994 1502 989 1500 983C1498 978 1495 967 1494 964M1494 964C1494 966 1494 973 1492 978C1490 982 1486 987 1483 992C1481 996 1477 1001 1475 1006C1473 1010 1470 1015 1469 1019C1469 1024 1472 1031 1473 1033M1576 851C1577 853 1579 859 1579 864C1579 869 1578 875 1576 881C1574 887 1571 894 1567 900C1563 906 1558 913 1553 918C1548 923 1539 928 1536 931M1576 851C1576 855 1575 865 1572 872C1570 879 1565 887 1561 894C1557 902 1551 911 1547 917C1543 923 1538 928 1536 931M1604 800C1608 803 1620 811 1628 817C1636 823 1647 833 1651 836M1651 836C1650 839 1648 847 1647 853C1646 858 1644 867 1643 869M1643 828C1649 830 1664 835 1678 839C1691 843 1710 847 1725 850C1740 853 1754 854 1767 856C1779 857 1794 857 1800 857M1653 800C1655 802 1660 810 1664 814C1668 818 1672 824 1678 824C1683 825 1689 821 1697 817C1706 813 1723 803 1728 800M1643 828C1644 826 1646 819 1649 817C1651 814 1657 813 1658 812M1586 836C1588 838 1593 846 1597 850C1602 854 1606 857 1614 861C1621 865 1630 869 1642 872C1653 876 1667 879 1683 883C1700 888 1719 892 1739 897C1758 902 1790 910 1800 912M1678 885C1674 885 1662 886 1656 889C1649 891 1644 895 1639 900C1634 905 1629 913 1625 919C1621 926 1618 933 1617 939C1615 945 1615 949 1616 956C1617 962 1619 970 1622 978C1625 985 1628 993 1633 1000C1638 1007 1645 1015 1653 1022C1660 1030 1668 1037 1678 1044C1688 1052 1699 1061 1711 1068C1724 1075 1738 1082 1753 1089C1768 1095 1792 1104 1800 1107M1711 1068C1715 1072 1725 1082 1733 1092C1742 1101 1753 1115 1761 1125C1769 1135 1777 1146 1783 1153C1790 1160 1797 1164 1800 1167M1718 1081C1719 1087 1719 1106 1721 1119C1722 1133 1725 1148 1728 1161C1730 1175 1735 1194 1737 1200M1461 1000C1462 1008 1465 1032 1467 1050C1469 1068 1471 1088 1474 1106C1476 1123 1478 1140 1481 1156C1483 1171 1486 1193 1487 1200M1561 978C1563 985 1568 1006 1572 1022C1576 1038 1581 1056 1586 1072C1591 1088 1595 1104 1600 1119C1605 1135 1610 1153 1614 1167C1618 1180 1623 1194 1625 1200M1117 1051C1119 1056 1127 1065 1133 1078C1140 1091 1148 1111 1156 1128C1163 1144 1172 1166 1178 1178C1183 1190 1186 1196 1187 1200M1133 1051C1137 1058 1148 1077 1156 1092C1163 1107 1171 1125 1178 1142C1185 1158 1193 1179 1197 1189C1201 1199 1201 1198 1202 1200M1351 1172C1350 1175 1346 1184 1344 1189C1343 1194 1341 1198 1341 1200M1428 1185L1425 1200"/>
<path stroke-opacity=".45" d="M1361 956C1360 959 1358 971 1356 978C1353 984 1349 992 1347 994M1375 972C1374 977 1370 990 1367 1000C1363 1010 1357 1025 1356 1031M1389 986C1387 992 1381 1012 1378 1022C1375 1033 1372 1038 1369 1050C1367 1062 1365 1075 1364 1092C1363 1108 1363 1138 1362 1147M1406 994C1405 999 1403 1013 1400 1022C1397 1031 1393 1038 1389 1050C1385 1062 1379 1078 1375 1092C1371 1106 1366 1122 1364 1133C1362 1145 1363 1156 1362 1161M1408 1000C1407 1006 1405 1024 1403 1036C1400 1048 1397 1061 1394 1072C1392 1084 1388 1093 1386 1106C1384 1118 1383 1134 1383 1147C1384 1160 1387 1175 1389 1183C1391 1191 1394 1193 1394 1194M1428 997C1428 1001 1430 1014 1431 1022C1431 1030 1433 1041 1433 1044M1447 997L1447 1022M1417 997L1417 1017M1546 800C1546 805 1546 816 1544 828C1543 839 1541 857 1539 869C1537 882 1534 894 1531 903C1528 912 1522 921 1521 925M1589 886C1592 888 1601 894 1608 897C1615 901 1627 906 1631 908M1646 906C1657 907 1691 910 1711 912C1731 915 1752 917 1767 918C1781 919 1794 920 1800 920M1511 1003C1512 1011 1513 1033 1514 1050C1515 1067 1516 1087 1517 1106C1518 1124 1519 1145 1519 1161C1520 1177 1520 1194 1521 1200M1624 981C1625 988 1629 1008 1633 1022C1637 1036 1643 1050 1647 1064C1652 1078 1656 1093 1661 1106C1666 1119 1675 1136 1678 1142M1228 1158C1231 1160 1238 1166 1244 1169C1250 1173 1261 1178 1264 1179M1297 882C1300 882 1308 881 1314 881C1319 881 1328 881 1331 881"/>
<path d="M1100 943C1095 944 1082 948 1071 951C1059 953 1040 954 1029 956C1017 958 1011 959 1001 962C991 965 982 970 968 975C954 979 935 985 918 990C900 995 878 1002 862 1007C846 1012 832 1016 821 1019C809 1022 803 1021 796 1023C788 1025 781 1028 773 1032C766 1035 756 1040 751 1044C746 1048 745 1051 743 1054C741 1057 739 1060 739 1062M1100 987C1096 988 1091 990 1079 992C1067 994 1044 996 1029 998C1014 1000 996 1003 987 1004C978 1005 986 1003 975 1006C963 1009 937 1018 918 1023C899 1029 881 1034 862 1039C844 1043 823 1049 807 1052C790 1056 776 1058 765 1059C754 1061 746 1060 739 1062C731 1064 724 1067 718 1071C712 1074 707 1078 704 1080C701 1083 700 1086 700 1087M975 1006C976 1003 981 995 984 990C988 985 993 978 998 973C1004 968 1011 962 1018 959C1025 956 1033 955 1040 955C1047 955 1055 957 1062 959C1069 962 1076 966 1082 971C1087 975 1093 984 1096 987M980 1001C983 999 989 991 996 987C1002 983 1010 980 1018 978C1026 976 1035 977 1043 978C1051 978 1059 981 1065 983C1071 986 1078 991 1080 992M1100 1055C1097 1055 1092 1056 1084 1057C1077 1059 1066 1063 1057 1065C1047 1067 1040 1069 1029 1071C1017 1073 1001 1075 987 1076C973 1078 962 1078 946 1079C929 1081 909 1083 890 1084C871 1086 850 1086 834 1087C819 1088 805 1089 796 1090C786 1091 782 1092 779 1093M700 1087C698 1090 694 1099 691 1104C688 1109 684 1114 682 1118C679 1121 677 1122 676 1125C675 1128 677 1132 676 1134C676 1137 674 1137 673 1140C673 1143 674 1150 675 1154C676 1158 677 1162 679 1165C681 1168 685 1172 687 1175C690 1177 693 1180 694 1181M707 1084C706 1086 702 1089 700 1091C698 1094 697 1098 696 1101C694 1104 691 1107 690 1108M693 1119C692 1123 687 1134 686 1140C684 1146 683 1152 683 1157C684 1162 687 1166 689 1171C691 1175 693 1179 696 1182C698 1185 699 1187 701 1188C703 1188 706 1188 707 1186C708 1184 709 1181 708 1178C707 1174 704 1171 702 1168C701 1164 699 1161 698 1157C698 1152 700 1146 701 1143C702 1140 705 1139 705 1139M705 1139C707 1138 713 1136 718 1134C722 1133 728 1132 732 1131C736 1130 739 1129 743 1126C747 1123 752 1118 757 1114C761 1109 765 1104 768 1101C771 1098 773 1095 776 1093C779 1092 781 1093 784 1092C787 1092 793 1091 794 1091M711 1143C712 1145 715 1150 716 1154C718 1158 719 1162 722 1166C724 1170 729 1174 732 1178C735 1181 738 1184 740 1187C742 1190 742 1192 741 1194C741 1196 739 1198 737 1198C735 1198 734 1198 730 1196C727 1193 722 1188 718 1184C714 1181 710 1178 707 1173C704 1169 701 1161 700 1158M730 1140C731 1142 732 1147 733 1151C734 1155 737 1159 739 1162C740 1166 742 1170 743 1173C743 1177 742 1180 741 1182M709 1182C711 1184 715 1188 718 1191C720 1194 723 1199 724 1200M759 1115C759 1117 757 1125 757 1129C756 1133 757 1137 757 1140C758 1143 759 1145 761 1146C763 1146 766 1146 768 1146C769 1145 770 1143 771 1140C772 1137 772 1133 773 1129C774 1124 776 1118 778 1114C779 1109 780 1104 782 1101C783 1098 784 1096 786 1094C788 1092 793 1091 794 1091M946 1079C944 1086 939 1104 934 1118C930 1132 925 1149 921 1162C916 1176 911 1194 909 1200M1016 1087C1017 1088 1019 1089 1021 1093C1022 1097 1023 1104 1025 1112C1026 1120 1028 1132 1029 1140C1030 1148 1032 1155 1032 1162C1033 1170 1032 1178 1032 1184C1031 1191 1029 1197 1029 1200M1032 1162C1033 1168 1036 1189 1037 1196C1038 1202 1038 1199 1038 1200"/>
<path d="M1760 850C1769 852 1797 856 1816 860C1834 863 1857 867 1871 869C1885 872 1893 872 1898 873M1898 873C1898 875 1901 881 1902 886C1903 892 1904 899 1904 906C1904 912 1903 924 1903 928M1899 876C1906 876 1927 877 1941 879C1954 881 1966 883 1982 886C1998 889 2019 893 2038 897C2056 901 2075 907 2093 911C2112 915 2133 919 2149 922C2165 925 2179 927 2191 928C2202 930 2209 931 2216 933C2222 935 2226 935 2232 939C2239 943 2248 949 2254 956C2261 962 2267 972 2274 981C2280 989 2287 1000 2293 1008C2299 1017 2306 1026 2310 1031C2314 1035 2318 1035 2320 1036M1760 903C1767 905 1788 911 1802 914C1816 917 1833 921 1843 923C1854 925 1855 925 1866 926C1876 926 1891 927 1904 928C1918 930 1939 932 1946 933M1946 933C1946 937 1946 948 1945 956C1944 964 1942 973 1941 981C1939 988 1937 996 1935 1003C1933 1010 1928 1020 1927 1024M1948 936C1953 936 1967 936 1982 938C1997 939 2019 943 2038 946C2056 949 2075 952 2093 954C2112 957 2130 959 2149 961C2167 963 2191 964 2204 966C2218 968 2224 969 2232 971C2240 973 2246 975 2252 979C2258 984 2262 990 2268 997C2274 1004 2282 1015 2288 1022C2294 1030 2299 1036 2304 1042C2310 1048 2315 1053 2318 1058C2322 1063 2324 1070 2325 1072M1927 1024C1931 1024 1943 1026 1954 1026C1966 1027 1982 1028 1996 1028C2010 1029 2024 1029 2038 1028C2052 1028 2066 1028 2079 1026C2093 1025 2107 1023 2121 1022C2135 1020 2149 1018 2163 1017C2177 1016 2195 1015 2204 1014C2214 1014 2215 1014 2218 1014C2222 1014 2224 1016 2225 1016M1927 1024C1925 1028 1920 1039 1916 1047C1911 1056 1905 1066 1899 1075C1893 1084 1886 1094 1879 1103C1872 1111 1866 1118 1857 1125C1849 1132 1839 1138 1829 1144C1819 1151 1803 1162 1798 1166M1798 1166L1777 1144L1760 1126M1925 1025C1920 1034 1905 1060 1893 1078C1882 1096 1868 1116 1857 1133C1847 1150 1836 1169 1829 1181C1823 1192 1820 1197 1818 1200M1938 1026C1932 1035 1916 1061 1904 1078C1893 1095 1881 1112 1871 1128C1861 1144 1850 1163 1843 1175C1837 1187 1833 1196 1831 1200M1966 1028C1959 1037 1940 1060 1927 1078C1913 1095 1898 1116 1885 1133C1872 1150 1859 1169 1852 1181C1844 1192 1842 1197 1841 1200M2091 1022C2092 1024 2097 1021 2102 1031C2107 1040 2115 1061 2121 1078C2128 1095 2134 1116 2141 1133C2147 1151 2156 1172 2160 1183C2164 1194 2166 1197 2167 1200M2104 1025C2107 1031 2115 1048 2121 1064C2128 1080 2136 1101 2143 1119C2151 1138 2160 1162 2166 1175C2171 1188 2175 1196 2176 1200M2024 1140C2024 1145 2024 1159 2024 1167C2023 1175 2022 1183 2021 1189C2020 1194 2020 1198 2020 1200M2207 1015C2207 1018 2208 1026 2209 1031C2210 1035 2211 1038 2213 1042C2215 1045 2218 1050 2221 1052C2224 1055 2228 1056 2229 1057M2218 1024C2220 1026 2225 1034 2229 1039C2234 1044 2238 1049 2243 1053C2248 1057 2255 1061 2260 1064C2265 1067 2271 1069 2274 1071C2277 1073 2277 1075 2279 1078C2282 1080 2285 1084 2288 1086C2290 1088 2294 1088 2295 1089M2221 1052C2222 1055 2225 1063 2227 1069C2229 1076 2230 1083 2232 1089C2234 1094 2236 1099 2238 1103C2240 1106 2242 1108 2245 1109C2247 1110 2251 1111 2253 1110C2255 1109 2257 1109 2258 1104C2258 1100 2258 1091 2257 1083C2257 1076 2255 1065 2254 1061M2295 1015C2296 1017 2299 1021 2300 1025C2302 1029 2304 1036 2304 1039C2305 1042 2303 1044 2303 1044M2320 1036C2320 1040 2320 1055 2321 1061C2322 1067 2324 1069 2325 1072C2327 1076 2329 1079 2329 1083C2330 1088 2330 1094 2331 1100C2332 1106 2335 1111 2335 1117C2335 1122 2334 1127 2332 1133C2331 1140 2329 1151 2327 1156C2325 1160 2322 1160 2321 1161M2303 1044C2305 1047 2312 1053 2316 1058C2319 1063 2322 1071 2324 1074M2288 1086C2289 1088 2295 1091 2298 1094C2300 1098 2301 1101 2302 1106C2302 1110 2302 1116 2302 1122C2301 1128 2300 1136 2299 1142C2298 1148 2295 1154 2295 1158C2294 1162 2296 1165 2298 1167C2299 1168 2301 1169 2302 1169M2289 1086C2290 1089 2293 1097 2293 1103C2294 1109 2291 1115 2291 1122C2290 1129 2288 1138 2288 1144C2288 1150 2289 1155 2291 1158C2292 1162 2296 1165 2298 1167M2320 1094C2320 1098 2320 1107 2320 1114C2319 1120 2318 1127 2317 1133C2316 1140 2314 1147 2311 1153C2309 1159 2304 1165 2302 1169C2300 1173 2299 1173 2299 1175C2299 1177 2301 1179 2303 1179C2305 1179 2307 1178 2309 1176C2311 1174 2313 1170 2316 1167C2319 1163 2325 1157 2327 1156M2322 1158C2322 1160 2322 1166 2321 1169C2320 1172 2318 1175 2316 1176C2313 1178 2310 1176 2309 1176"/>
<path stroke-opacity=".45" d="M1760 917C1765 917 1776 917 1788 918C1799 919 1816 921 1829 922C1842 923 1860 925 1866 926M1760 1092C1765 1094 1777 1100 1788 1104C1799 1108 1820 1113 1827 1115M2004 1151C2005 1155 2009 1167 2010 1175C2011 1183 2012 1196 2013 1200M2052 1117C2051 1122 2049 1137 2048 1147C2046 1157 2044 1169 2041 1178C2037 1187 2028 1196 2026 1200"/>
<path d="M911 1200C908 1208 900 1233 894 1250C889 1267 883 1283 878 1300C872 1317 867 1334 861 1350C856 1366 850 1380 844 1394C839 1409 833 1425 829 1438C825 1450 821 1462 819 1467M829 1438C827 1441 820 1451 817 1456C813 1460 809 1462 807 1464M805 1462L816 1469L810 1478L798 1471L805 1462M1029 1200C1028 1205 1026 1218 1022 1228C1019 1238 1014 1250 1008 1261C1003 1272 996 1283 989 1294C982 1306 974 1318 967 1331C959 1344 951 1359 944 1372C938 1386 933 1398 928 1411C922 1424 917 1437 911 1450C906 1463 899 1479 894 1489C890 1499 886 1505 885 1508M1038 1200C1039 1206 1042 1220 1044 1233C1047 1246 1049 1263 1051 1278C1054 1293 1056 1308 1058 1322C1060 1336 1062 1349 1064 1361C1066 1373 1069 1384 1071 1394C1073 1405 1076 1418 1077 1422M1232 1267C1228 1269 1217 1275 1208 1281C1199 1287 1188 1294 1178 1303C1168 1311 1159 1320 1150 1331C1141 1341 1133 1352 1125 1364C1117 1375 1108 1388 1100 1400C1092 1412 1083 1425 1078 1433C1072 1442 1070 1446 1067 1450C1064 1454 1062 1457 1061 1458M1061 1458C1062 1461 1068 1468 1072 1475C1077 1482 1082 1491 1089 1500C1095 1509 1103 1519 1111 1528C1119 1537 1129 1544 1139 1553C1149 1561 1161 1570 1172 1578C1183 1585 1194 1593 1206 1599C1217 1604 1233 1608 1239 1610M1400 1394C1399 1404 1397 1432 1394 1450C1392 1468 1389 1485 1386 1500C1383 1515 1380 1527 1375 1539C1370 1551 1365 1563 1358 1572C1352 1581 1345 1588 1336 1594C1327 1601 1311 1607 1306 1610M1186 1200C1188 1205 1195 1219 1200 1231C1205 1243 1214 1265 1217 1272M1203 1200C1205 1204 1211 1217 1214 1225C1217 1233 1221 1245 1222 1250C1224 1255 1222 1253 1222 1254M1225 1200C1225 1205 1225 1219 1224 1228C1224 1237 1221 1247 1221 1253C1221 1258 1224 1257 1226 1260C1229 1262 1234 1267 1238 1269C1241 1272 1244 1275 1247 1276C1251 1276 1255 1275 1258 1275C1262 1275 1265 1275 1269 1276C1274 1278 1279 1282 1283 1285C1288 1287 1290 1289 1297 1290C1304 1291 1316 1291 1325 1292C1334 1293 1344 1294 1353 1296C1361 1298 1369 1302 1375 1303C1381 1303 1385 1300 1389 1299C1393 1298 1398 1297 1400 1297M1231 1236C1231 1238 1230 1244 1230 1247C1230 1251 1231 1256 1232 1258C1233 1261 1234 1264 1235 1262C1235 1261 1236 1252 1236 1247C1235 1243 1234 1238 1233 1236C1233 1234 1231 1236 1231 1236M1233 1267C1233 1269 1232 1279 1232 1283C1232 1288 1231 1291 1235 1294C1239 1298 1247 1302 1256 1306C1264 1309 1273 1312 1283 1315C1294 1318 1305 1321 1317 1322C1328 1324 1342 1324 1353 1324C1363 1324 1373 1323 1381 1322C1388 1321 1397 1320 1400 1319M1342 1200C1340 1204 1336 1214 1333 1222C1331 1231 1329 1239 1328 1250C1326 1261 1325 1282 1325 1289"/>
<path stroke-opacity=".45" d="M1225 1307C1226 1311 1230 1323 1232 1333C1234 1343 1237 1356 1239 1367C1241 1377 1244 1389 1246 1397C1248 1405 1249 1411 1250 1414M1339 1212C1343 1212 1353 1208 1361 1207C1369 1206 1384 1205 1389 1204M1328 1260C1331 1260 1340 1261 1344 1261C1349 1261 1354 1260 1356 1260M1283 1247C1281 1250 1276 1259 1272 1264C1269 1268 1263 1273 1261 1274M1307 1272C1306 1274 1304 1280 1303 1283C1301 1286 1299 1288 1299 1289"/>
<path d="M1424 1200C1424 1207 1421 1227 1419 1242C1417 1256 1415 1277 1413 1286C1411 1295 1409 1292 1408 1297C1406 1303 1406 1308 1405 1319C1404 1331 1403 1350 1401 1367C1399 1384 1396 1404 1394 1422C1391 1441 1388 1462 1386 1478C1383 1493 1381 1508 1380 1514M1380 1300C1383 1300 1392 1299 1397 1299C1401 1298 1406 1300 1408 1297C1410 1295 1411 1285 1410 1283C1409 1282 1404 1286 1402 1289C1400 1291 1398 1297 1397 1299M1380 1322C1382 1322 1390 1321 1394 1320C1398 1319 1404 1318 1406 1318M1487 1200C1489 1209 1493 1235 1497 1256C1500 1276 1504 1302 1508 1325C1511 1348 1515 1371 1519 1394C1523 1418 1527 1444 1531 1464C1536 1484 1543 1506 1545 1514M1520 1200C1521 1209 1523 1235 1524 1256C1526 1276 1528 1302 1530 1325C1532 1348 1533 1371 1536 1394C1538 1418 1541 1443 1542 1464C1544 1485 1545 1503 1547 1519C1548 1536 1551 1549 1552 1561C1554 1574 1555 1588 1556 1594M1556 1594C1559 1594 1567 1596 1574 1596C1582 1595 1592 1593 1599 1590C1607 1588 1615 1583 1622 1579C1628 1575 1634 1571 1638 1567C1643 1563 1645 1560 1648 1556C1651 1551 1654 1545 1658 1539C1661 1533 1666 1525 1669 1519C1672 1514 1675 1509 1678 1504C1681 1499 1686 1493 1688 1489C1691 1484 1693 1480 1694 1478M1630 1243L1648 1242L1663 1236L1669 1242M1630 1243C1631 1252 1632 1279 1634 1297C1636 1316 1640 1334 1644 1353C1648 1372 1654 1394 1658 1411C1662 1428 1666 1440 1669 1456C1672 1471 1676 1496 1678 1504M1648 1242C1650 1251 1654 1279 1658 1297C1661 1316 1665 1334 1669 1353C1673 1372 1677 1395 1680 1411C1683 1427 1686 1439 1688 1450C1691 1461 1693 1473 1694 1478M1639 1283L1646 1283M1654 1358L1659 1358M1667 1426L1673 1424M1648 1242C1650 1244 1653 1250 1658 1256C1662 1261 1668 1265 1674 1272C1681 1279 1691 1289 1699 1297C1708 1305 1719 1313 1727 1319C1736 1326 1744 1332 1749 1336C1755 1340 1759 1343 1761 1344M1669 1242C1672 1244 1678 1249 1686 1256C1693 1262 1704 1272 1713 1281C1723 1289 1732 1298 1741 1306C1750 1313 1763 1321 1768 1324M1761 1344L1768 1324L1775 1311M1674 1266C1674 1265 1674 1263 1675 1263C1676 1262 1677 1262 1678 1262C1679 1262 1680 1262 1681 1263C1682 1263 1682 1265 1682 1266C1682 1267 1682 1268 1681 1269C1680 1270 1679 1270 1678 1270C1677 1270 1676 1270 1675 1269C1674 1268 1674 1266 1674 1266M1725 1311C1725 1311 1725 1309 1726 1308C1727 1307 1728 1307 1729 1307C1730 1307 1732 1307 1732 1308C1733 1309 1733 1310 1733 1311C1733 1312 1733 1313 1732 1314C1732 1315 1730 1315 1729 1315C1728 1315 1727 1315 1726 1314C1725 1313 1725 1312 1725 1311M1627 1200C1629 1203 1633 1211 1636 1217C1638 1222 1642 1232 1644 1235M1737 1200C1739 1205 1743 1218 1747 1228C1751 1238 1756 1251 1761 1261C1765 1271 1769 1282 1772 1289C1774 1295 1774 1296 1775 1300C1776 1304 1775 1309 1775 1311M1751 1340C1750 1345 1749 1358 1747 1367C1745 1376 1742 1386 1738 1394C1735 1403 1731 1410 1727 1417C1723 1423 1718 1429 1713 1433C1709 1438 1703 1441 1699 1444C1696 1448 1692 1451 1690 1454C1688 1457 1688 1457 1688 1461C1689 1465 1693 1475 1694 1478M1819 1200C1815 1206 1803 1225 1797 1236C1790 1247 1785 1258 1780 1267C1775 1275 1771 1283 1769 1286M1836 1200C1832 1206 1820 1224 1813 1236C1806 1249 1800 1262 1794 1275C1788 1288 1778 1305 1775 1311M1648 1556C1650 1558 1654 1567 1658 1572C1662 1578 1666 1584 1672 1589C1677 1594 1684 1598 1691 1601C1698 1605 1710 1609 1713 1610M2015 1200C2015 1204 2017 1214 2016 1222C2015 1231 2014 1241 2011 1250C2007 1259 2000 1268 1997 1275C1993 1282 1992 1281 1988 1292C1985 1302 1981 1322 1977 1339C1973 1356 1968 1376 1963 1394C1958 1413 1952 1432 1947 1450C1941 1468 1935 1486 1930 1500C1925 1514 1920 1525 1916 1533C1912 1542 1910 1546 1908 1550C1906 1554 1905 1555 1905 1556M1905 1556C1903 1557 1899 1563 1894 1567C1889 1571 1881 1575 1874 1579C1868 1583 1861 1586 1852 1589C1844 1592 1834 1596 1824 1599C1815 1601 1804 1604 1797 1606C1789 1607 1783 1609 1780 1610M2016 1222C2017 1229 2019 1252 2022 1261C2024 1270 2026 1270 2030 1278C2034 1286 2041 1297 2047 1308C2052 1320 2059 1334 2063 1347C2068 1361 2072 1378 2074 1389C2077 1400 2079 1407 2080 1411M2027 1200C2026 1202 2023 1208 2022 1211C2020 1214 2018 1218 2018 1219M2040 1211C2038 1212 2033 1216 2030 1218C2027 1220 2021 1221 2019 1222"/>
<path stroke-opacity=".45" d="M1688 1203C1692 1207 1701 1221 1708 1231C1715 1240 1723 1251 1730 1261C1737 1271 1746 1282 1752 1289C1759 1296 1766 1302 1769 1304M1661 1267C1663 1274 1669 1296 1674 1311C1680 1326 1687 1342 1694 1356C1700 1369 1708 1384 1713 1394C1719 1405 1725 1413 1727 1417M1775 1311C1773 1316 1767 1330 1763 1339C1760 1348 1755 1359 1752 1367C1749 1375 1746 1383 1745 1386M2055 1304C2056 1309 2058 1324 2061 1333C2063 1342 2068 1354 2069 1358M1994 1264C1993 1267 1992 1276 1991 1281C1990 1285 1989 1290 1988 1292M1915 1481C1914 1486 1912 1504 1911 1514C1909 1524 1907 1537 1906 1542"/>
<path d="M2076 1395C2078 1402 2082 1420 2086 1433C2089 1447 2094 1462 2098 1476C2102 1490 2106 1507 2110 1519C2113 1532 2116 1546 2118 1551M2167 1200C2169 1207 2175 1228 2181 1243C2187 1258 2193 1274 2200 1290C2207 1307 2215 1325 2224 1343C2232 1360 2242 1379 2250 1395C2258 1412 2270 1435 2274 1443M2177 1200C2180 1208 2189 1232 2195 1248C2201 1263 2207 1279 2214 1295C2221 1312 2230 1331 2238 1348C2246 1364 2254 1380 2262 1395C2270 1410 2282 1431 2286 1438"/>
<path stroke-opacity=".45" d="M2054 1304C2055 1308 2058 1320 2060 1329C2062 1337 2064 1350 2065 1355"/>
<path d="M1239 1610C1241 1610 1245 1612 1251 1612C1257 1613 1267 1613 1275 1613C1283 1613 1294 1611 1299 1610C1304 1610 1304 1609 1305 1609M1713 1610C1717 1611 1728 1613 1735 1613C1742 1614 1749 1614 1756 1614C1764 1613 1776 1610 1780 1610"/>
<path d="M856 1526C855 1530 849 1539 847 1548C844 1556 842 1567 841 1576C839 1585 838 1594 838 1602C837 1610 839 1620 839 1624M867 1533C866 1537 861 1547 859 1555C856 1563 855 1572 854 1581C853 1590 852 1600 852 1607C852 1614 853 1621 853 1624M839 1624L853 1625M692 1556C694 1558 699 1564 704 1569C709 1574 716 1582 723 1588C730 1594 740 1602 747 1607C754 1612 763 1616 766 1618M692 1556C692 1559 690 1566 691 1571C691 1577 692 1585 694 1590C696 1596 698 1602 701 1607C705 1612 711 1620 713 1623M672 1561C671 1563 668 1568 668 1571C668 1575 670 1578 670 1581C670 1584 668 1587 668 1590C669 1594 673 1596 674 1600C675 1604 671 1608 673 1612C674 1616 681 1624 682 1626M672 1561C673 1561 679 1557 682 1556C686 1555 690 1555 692 1554M682 1544C684 1545 691 1546 694 1548C697 1549 700 1553 701 1554M682 1544C680 1545 674 1546 670 1548C667 1549 661 1552 659 1554C656 1557 655 1559 654 1562C653 1565 652 1572 651 1574M675 1554L670 1561M659 1557C660 1557 664 1558 666 1558C668 1559 671 1561 672 1561M651 1561C649 1561 641 1562 637 1563C633 1564 631 1567 628 1569C624 1571 622 1572 618 1574C614 1576 606 1578 604 1580C601 1582 603 1584 603 1586C604 1588 608 1592 609 1593M609 1593C612 1591 620 1585 628 1582C635 1579 645 1578 651 1576C658 1574 663 1572 666 1571M599 1598L609 1593M599 1598C599 1599 601 1604 601 1607C602 1610 602 1613 603 1614M612 1612C614 1610 618 1604 623 1600C627 1596 634 1593 640 1590C645 1588 655 1585 659 1583M625 1619C627 1617 631 1611 635 1607C639 1604 644 1600 649 1598C654 1595 661 1593 663 1592M643 1624C644 1622 648 1615 651 1612C655 1609 660 1607 663 1605C667 1603 671 1601 673 1600M603 1614C604 1615 610 1621 613 1621C617 1622 623 1619 625 1619M625 1619C627 1620 632 1623 635 1624C638 1625 642 1624 643 1624M643 1624C644 1624 648 1627 651 1627C654 1627 658 1625 661 1624C664 1622 665 1619 668 1619C672 1619 680 1625 682 1626M601 1606C601 1608 601 1614 601 1619C601 1624 603 1630 604 1633C605 1637 606 1639 606 1640M603 1614C605 1616 610 1621 616 1624C622 1626 630 1629 640 1630C649 1631 663 1629 675 1629C687 1628 699 1626 711 1625C723 1624 738 1622 747 1620C756 1619 760 1617 766 1617C772 1616 776 1615 782 1615C789 1616 797 1618 806 1619C815 1620 829 1622 837 1623C845 1623 848 1622 854 1621C859 1620 866 1619 870 1617C875 1615 879 1612 881 1610C884 1607 884 1604 885 1602M604 1619C608 1621 618 1627 628 1629C638 1631 649 1631 663 1631C677 1631 695 1629 711 1627C727 1626 747 1623 759 1621C770 1620 772 1619 782 1620C792 1621 806 1625 818 1626C830 1627 844 1627 854 1626C863 1625 870 1623 875 1620C881 1618 884 1615 886 1612C888 1609 888 1602 888 1600M713 1623L732 1623M606 1640C609 1642 616 1649 623 1652C630 1656 638 1658 647 1660C655 1662 666 1663 675 1664C685 1664 694 1664 704 1663C714 1662 724 1659 735 1656C745 1653 756 1647 766 1644C776 1641 786 1638 794 1638C802 1637 808 1638 813 1639C818 1641 822 1642 825 1645C828 1648 830 1653 831 1657C833 1661 833 1666 834 1668M834 1668C837 1668 848 1669 854 1669C860 1668 866 1668 870 1667C875 1666 879 1665 881 1662C884 1659 884 1654 885 1648C886 1641 887 1632 887 1624C888 1616 888 1604 888 1600M887 1588C888 1587 891 1581 892 1579C893 1576 895 1570 895 1571C896 1573 897 1580 897 1586C897 1591 896 1598 895 1605C895 1611 893 1621 892 1624C891 1627 889 1623 888 1623M890 1581L893 1576"/>
<path d="M2115 1551C2116 1555 2121 1568 2124 1575C2127 1582 2131 1589 2133 1592M2133 1592C2136 1591 2145 1588 2152 1586C2158 1583 2165 1580 2171 1577C2178 1574 2181 1572 2189 1568C2197 1564 2209 1559 2219 1554C2229 1549 2241 1544 2249 1540C2257 1536 2262 1534 2269 1531C2275 1528 2284 1525 2288 1523C2293 1521 2295 1521 2298 1519C2302 1518 2308 1517 2310 1516M2271 1440C2273 1444 2278 1454 2283 1462C2287 1470 2294 1482 2298 1490C2303 1497 2306 1504 2308 1507C2310 1511 2311 1512 2311 1512M2293 1440C2295 1442 2300 1448 2302 1452C2305 1456 2307 1462 2308 1464M2308 1464C2308 1466 2306 1471 2304 1476C2303 1480 2300 1487 2299 1490M2308 1464C2310 1465 2313 1467 2318 1470C2323 1472 2330 1476 2338 1480C2346 1483 2358 1488 2368 1493C2378 1497 2388 1501 2398 1505C2408 1510 2417 1515 2427 1519C2437 1524 2449 1528 2457 1531C2465 1534 2469 1536 2477 1537C2485 1538 2500 1538 2505 1539M2505 1539C2505 1539 2507 1540 2509 1543C2510 1546 2512 1551 2513 1555C2514 1559 2515 1564 2515 1569C2515 1574 2514 1579 2513 1583C2511 1587 2508 1592 2507 1595C2505 1597 2503 1597 2503 1598M2311 1512C2313 1514 2318 1517 2322 1519C2327 1522 2333 1525 2338 1527C2343 1530 2347 1531 2354 1534C2361 1538 2371 1543 2378 1547C2385 1551 2391 1553 2398 1557C2404 1561 2411 1565 2417 1569C2424 1572 2431 1575 2437 1578C2444 1581 2451 1584 2457 1587C2464 1589 2469 1591 2477 1593C2485 1595 2498 1597 2503 1598M2473 1537C2474 1539 2476 1542 2476 1545C2476 1548 2475 1552 2473 1555C2471 1558 2467 1561 2463 1563C2459 1565 2453 1567 2449 1568C2445 1569 2441 1569 2439 1571C2437 1573 2438 1577 2437 1578M2463 1588C2465 1588 2473 1589 2477 1588C2481 1587 2485 1586 2489 1583C2493 1580 2497 1576 2501 1571C2504 1566 2507 1559 2509 1555C2510 1551 2510 1547 2511 1545M2429 1523C2430 1525 2431 1529 2430 1531C2430 1533 2429 1534 2425 1535C2421 1537 2410 1541 2407 1542M2307 1484C2308 1482 2309 1475 2310 1472C2311 1469 2312 1465 2313 1465C2315 1464 2317 1466 2318 1468C2320 1470 2322 1474 2323 1478C2324 1481 2325 1486 2326 1488M2337 1496C2337 1494 2338 1490 2339 1488C2340 1485 2342 1482 2344 1482C2346 1481 2348 1483 2350 1486C2352 1488 2354 1493 2355 1496C2356 1498 2357 1499 2357 1500M2368 1507C2368 1506 2369 1502 2371 1500C2372 1497 2375 1495 2377 1495C2379 1495 2380 1497 2382 1500C2383 1502 2386 1507 2387 1509C2388 1512 2388 1513 2388 1513M2388 1513C2388 1512 2389 1507 2390 1505C2391 1504 2393 1503 2394 1503C2395 1504 2396 1506 2396 1508C2396 1511 2394 1514 2394 1515M2309 1480C2314 1482 2327 1489 2338 1494C2350 1499 2366 1505 2378 1509C2390 1514 2405 1519 2412 1520C2418 1522 2417 1518 2414 1516C2412 1514 2400 1510 2398 1508M2190 1568C2189 1571 2188 1582 2188 1589C2188 1596 2188 1602 2189 1609C2190 1616 2192 1624 2193 1630C2195 1637 2196 1646 2197 1650C2198 1654 2199 1654 2199 1655M2199 1655C2203 1656 2209 1660 2219 1662C2229 1664 2246 1666 2259 1668C2272 1670 2285 1672 2298 1673C2312 1674 2325 1675 2338 1676C2351 1677 2365 1677 2378 1678C2391 1679 2406 1680 2417 1680C2429 1680 2439 1680 2447 1680C2455 1679 2460 1679 2467 1677C2474 1676 2481 1673 2487 1670C2493 1667 2498 1664 2503 1660C2507 1656 2511 1651 2515 1646C2518 1641 2521 1635 2523 1630C2524 1626 2525 1623 2525 1619C2524 1615 2523 1610 2521 1607C2519 1604 2516 1602 2513 1601C2510 1599 2504 1598 2503 1598M2193 1630C2196 1632 2204 1636 2211 1638C2218 1640 2227 1641 2235 1642C2243 1644 2248 1644 2259 1645C2269 1646 2285 1647 2298 1648C2312 1649 2328 1651 2338 1652C2349 1653 2352 1654 2362 1654C2372 1655 2387 1656 2398 1656C2409 1657 2418 1657 2427 1657C2437 1657 2446 1657 2453 1657C2461 1656 2467 1655 2473 1653C2479 1652 2484 1649 2489 1646C2494 1643 2500 1638 2505 1634C2509 1630 2512 1627 2515 1623C2517 1618 2519 1611 2520 1609M2194 1568L2256 1645M2202 1563L2265 1645M2213 1557L2282 1647M2190 1579L2237 1643M2257 1539C2257 1541 2259 1544 2261 1547C2262 1550 2264 1552 2267 1555C2270 1558 2273 1562 2279 1565C2284 1568 2292 1572 2298 1575C2305 1578 2312 1579 2318 1581C2324 1583 2329 1585 2334 1587C2339 1589 2346 1591 2348 1592M2257 1539C2259 1538 2263 1535 2269 1533C2274 1531 2283 1529 2288 1528C2294 1527 2299 1527 2302 1527C2305 1528 2303 1530 2306 1530C2310 1531 2320 1529 2322 1529M2302 1537C2304 1536 2307 1533 2310 1531C2313 1530 2318 1528 2320 1528C2323 1528 2325 1529 2324 1530C2323 1532 2317 1535 2314 1537C2311 1539 2308 1542 2306 1542C2304 1542 2303 1538 2302 1537M2324 1529C2325 1531 2328 1536 2328 1539C2329 1543 2328 1549 2326 1551C2325 1553 2322 1554 2320 1553C2319 1552 2318 1547 2318 1543C2318 1540 2321 1533 2321 1531M2328 1557C2329 1556 2332 1552 2334 1549C2336 1546 2340 1543 2342 1541C2344 1540 2348 1538 2348 1539C2348 1541 2346 1546 2344 1549C2342 1552 2338 1557 2336 1559C2334 1561 2331 1561 2330 1561C2329 1561 2329 1558 2328 1557M2347 1539C2348 1541 2350 1547 2352 1551C2353 1555 2356 1561 2356 1563C2356 1565 2353 1566 2352 1565C2351 1564 2349 1559 2348 1555C2347 1551 2346 1545 2345 1543M2358 1569C2359 1568 2363 1563 2366 1561C2369 1559 2373 1556 2376 1555C2378 1554 2380 1555 2380 1557C2379 1559 2376 1564 2374 1567C2371 1570 2368 1574 2366 1575C2364 1576 2361 1576 2360 1575C2359 1574 2358 1570 2358 1569M2378 1556C2378 1558 2376 1565 2377 1569C2377 1573 2379 1577 2380 1579C2381 1581 2382 1583 2384 1583C2386 1583 2389 1580 2392 1577C2394 1574 2397 1570 2398 1567C2399 1564 2398 1561 2398 1559C2397 1558 2395 1557 2394 1558C2392 1559 2389 1564 2388 1567C2386 1570 2384 1574 2384 1575M2398 1567C2399 1568 2404 1569 2406 1571C2407 1573 2407 1576 2407 1577C2406 1578 2402 1579 2402 1579M2415 1571C2415 1573 2416 1578 2415 1581C2414 1584 2412 1587 2410 1589C2407 1591 2403 1592 2402 1593M2362 1654C2363 1652 2364 1647 2366 1642C2368 1638 2371 1633 2376 1628C2380 1624 2386 1619 2392 1618C2397 1617 2405 1621 2410 1623C2414 1624 2416 1627 2419 1627C2423 1626 2426 1622 2429 1620C2432 1617 2433 1613 2437 1612C2442 1610 2452 1610 2457 1609C2463 1607 2468 1604 2471 1602C2474 1599 2476 1596 2477 1595"/>
<path stroke-dasharray="5 3" d="M2307 1507C2311 1509 2320 1513 2328 1515C2336 1518 2350 1522 2354 1523M2363 1503C2362 1506 2358 1513 2357 1519C2355 1525 2354 1536 2354 1539M2392 1516C2393 1520 2398 1529 2402 1535C2405 1542 2408 1549 2412 1555C2415 1561 2420 1568 2421 1571M2259 1538C2262 1538 2272 1538 2279 1537C2285 1537 2295 1536 2298 1536M2227 1573C2230 1572 2240 1568 2247 1565C2253 1562 2263 1558 2267 1557M2265 1551C2269 1554 2280 1563 2288 1567C2297 1571 2309 1573 2318 1577C2328 1581 2341 1587 2346 1589M2358 1577C2357 1581 2352 1591 2350 1599C2348 1606 2345 1616 2344 1623C2343 1629 2342 1633 2342 1638C2342 1644 2345 1651 2345 1653M2362 1577C2361 1581 2357 1591 2355 1599C2353 1606 2350 1616 2349 1623C2348 1629 2347 1633 2347 1638C2347 1644 2348 1651 2348 1653M2394 1583C2395 1586 2399 1597 2402 1603C2404 1609 2408 1616 2410 1619"/>
<path d="M1331 617C1331 617 1333 616 1335 615C1336 615 1339 615 1341 615C1343 616 1345 617 1347 618C1349 619 1350 621 1351 622C1352 623 1352 625 1352 626M1332 620C1333 620 1336 618 1338 618C1340 618 1342 619 1344 620C1346 621 1348 622 1348 624C1349 625 1349 628 1349 629M1331 636C1332 635 1333 632 1334 630C1335 628 1335 627 1337 625C1338 624 1339 623 1341 623C1342 624 1344 625 1345 626C1346 627 1347 629 1348 631C1348 633 1348 635 1348 636M1337 625C1336 626 1335 629 1335 631C1334 633 1334 635 1335 637C1336 639 1337 642 1339 642C1340 643 1342 641 1343 641M1331 636C1332 636 1333 638 1334 639C1335 640 1336 642 1337 642C1338 643 1339 643 1340 643M1339 603C1340 602 1343 601 1345 601C1347 601 1350 601 1352 601C1354 601 1357 602 1359 603C1361 604 1362 605 1363 606M1353 610C1354 610 1358 610 1359 611C1360 612 1362 614 1362 614M1376 647C1377 648 1378 650 1379 651C1380 652 1381 653 1381 653M1382 644C1382 645 1383 647 1383 648C1383 650 1382 653 1381 653M1376 655C1377 655 1378 655 1379 654C1380 654 1381 654 1381 654M1377 659C1378 659 1379 657 1380 656C1380 656 1381 655 1381 655M1381 654C1382 654 1385 654 1387 654C1390 655 1392 656 1395 657C1397 658 1399 660 1401 661C1402 663 1404 665 1406 668C1407 670 1409 672 1410 675C1411 677 1412 680 1412 682C1412 684 1411 686 1411 687M1384 648C1386 648 1389 648 1391 649C1394 650 1396 652 1399 653C1401 655 1403 657 1405 659C1406 662 1408 664 1409 667C1410 669 1411 673 1412 675M1385 642C1387 643 1391 643 1394 644C1396 645 1398 647 1401 649C1403 651 1405 655 1407 657C1409 660 1411 664 1412 666M1396 660C1395 661 1393 663 1392 665C1391 666 1391 668 1390 670C1390 671 1391 674 1391 675M1380 667C1381 668 1384 671 1386 673C1389 675 1393 677 1396 678C1398 680 1402 681 1404 682C1406 683 1406 684 1407 684M1408 677C1408 678 1409 680 1409 682C1410 683 1410 686 1411 687M1389 626C1390 626 1393 625 1395 625C1396 626 1398 626 1400 627C1401 628 1401 629 1402 629M1390 631C1390 631 1392 633 1392 633C1393 633 1395 633 1396 633M1389 635L1392 633M1332 657C1330 658 1327 659 1325 659C1322 660 1321 660 1319 661C1318 662 1317 664 1317 666C1316 667 1317 669 1317 671C1317 672 1317 673 1317 674M1322 673L1323 676M1314 694C1315 695 1316 697 1318 699C1320 701 1323 702 1326 704C1328 705 1331 706 1333 707C1335 707 1336 707 1337 708M1315 703C1315 703 1316 705 1317 706C1318 707 1320 709 1320 709"/>
<path d="M1682 681C1683 681 1686 682 1689 683C1691 683 1694 684 1697 686C1700 687 1703 689 1706 690C1709 692 1712 694 1715 695C1718 697 1720 699 1722 701C1724 703 1725 704 1726 706C1727 707 1728 709 1728 710M1683 682C1684 683 1689 685 1693 686C1696 688 1700 689 1703 691C1706 692 1709 694 1712 696C1715 698 1718 700 1720 702C1722 704 1724 707 1725 708M1663 699C1664 699 1667 698 1670 697C1673 697 1677 697 1681 697C1684 698 1688 699 1691 700C1694 701 1697 702 1700 704C1703 705 1706 707 1708 709C1710 711 1712 713 1713 715C1714 717 1715 720 1716 721M1675 695C1676 696 1681 696 1685 697C1688 698 1692 699 1695 700C1698 701 1701 703 1704 705C1707 707 1709 709 1711 711C1713 713 1714 716 1715 717M1663 699C1663 700 1665 703 1666 705C1668 707 1671 710 1671 711M1669 702C1670 703 1671 705 1671 707C1672 708 1672 710 1672 711M1672 711C1673 712 1674 714 1675 715C1676 716 1678 718 1681 719C1683 720 1685 721 1688 722C1690 723 1694 724 1696 724C1698 725 1698 725 1698 725M1695 709C1695 710 1695 713 1694 714C1693 716 1692 717 1691 718C1690 719 1687 720 1687 720M1716 703C1716 704 1719 706 1720 707C1721 708 1722 709 1722 710C1722 711 1720 713 1720 713M1710 715C1711 716 1712 719 1713 720C1714 721 1716 722 1716 723M1707 711C1707 712 1709 715 1710 717C1711 719 1711 723 1711 724M1663 699C1666 696 1676 686 1683 681C1689 675 1695 671 1701 667C1707 664 1714 660 1719 657C1725 654 1731 651 1734 650M1665 679C1668 676 1676 668 1681 663C1686 659 1691 654 1696 650C1701 646 1707 642 1709 640M1647 640C1646 643 1644 650 1643 655C1642 660 1641 665 1641 670C1641 676 1640 681 1641 686C1641 691 1641 696 1642 701C1643 706 1644 713 1644 715M1677 640C1676 642 1672 648 1670 653C1669 658 1667 663 1666 668C1665 673 1664 679 1663 684C1663 689 1663 694 1663 699C1663 704 1663 708 1664 713C1665 718 1666 723 1667 727C1669 732 1670 735 1671 739C1673 744 1675 750 1676 752M1676 752C1674 751 1669 749 1665 748C1662 746 1658 743 1655 740C1653 738 1651 736 1649 734C1648 732 1647 729 1646 728M1646 728C1647 730 1649 734 1650 736C1652 739 1653 743 1654 746C1655 748 1656 751 1657 753M1657 753C1655 752 1651 750 1648 749C1645 747 1641 745 1640 744M1737 640C1737 643 1735 650 1734 655C1733 660 1732 665 1731 670C1731 676 1730 681 1730 686C1729 691 1729 697 1729 701C1729 705 1730 708 1729 711C1729 714 1728 717 1726 719C1725 722 1723 723 1721 725C1719 727 1714 730 1713 731M1713 731C1714 731 1718 731 1721 730C1724 730 1727 728 1729 727C1732 726 1734 724 1735 724M1735 724C1735 725 1735 729 1735 731C1736 734 1737 736 1737 739C1738 742 1740 748 1740 750M1741 719C1743 718 1748 714 1752 711C1755 708 1759 705 1762 702C1765 699 1768 694 1771 691C1773 687 1775 684 1777 682C1779 679 1780 677 1782 673C1783 670 1785 665 1786 660C1787 656 1788 652 1789 648C1790 645 1790 641 1790 640M1782 673C1782 675 1783 678 1784 681C1785 683 1786 687 1786 691C1787 694 1787 699 1787 703C1787 707 1787 712 1787 715C1786 719 1785 723 1785 724M1757 640C1756 643 1755 650 1754 655C1753 660 1751 665 1751 670C1750 676 1749 683 1749 686M1765 640C1764 643 1763 650 1762 655C1761 660 1759 666 1758 670C1756 675 1754 680 1753 684C1751 688 1749 691 1747 695C1745 698 1742 702 1740 705C1739 707 1737 709 1736 710M1741 719C1741 720 1740 723 1739 724C1739 726 1738 728 1738 729C1738 731 1737 734 1737 734M1757 725C1758 724 1760 721 1762 720C1764 719 1766 718 1768 718C1770 717 1773 718 1775 719C1777 719 1780 720 1782 721C1784 722 1785 724 1786 724M1762 722C1763 721 1767 720 1769 720C1771 719 1773 720 1776 721C1779 721 1783 724 1784 724M1750 734C1751 734 1753 732 1755 731C1756 730 1759 729 1761 729C1763 729 1766 730 1768 730C1770 731 1772 732 1773 733C1774 735 1775 736 1776 737C1777 739 1777 742 1777 742M1752 735C1753 735 1756 732 1759 732C1761 731 1764 732 1766 732C1768 733 1770 735 1772 736C1773 737 1774 740 1775 740M1750 734C1750 735 1747 737 1747 738C1746 740 1745 741 1746 742C1746 744 1746 745 1748 747C1749 748 1751 749 1753 750C1754 750 1756 751 1758 751C1759 751 1761 752 1762 752M1766 738C1766 739 1765 741 1764 742C1763 744 1762 746 1761 747C1760 747 1758 748 1758 748M1772 744L1767 751M1774 745L1778 749M1771 740L1775 746M1833 640C1833 643 1833 650 1833 655C1833 660 1833 665 1833 670C1832 676 1832 684 1831 691C1830 698 1829 705 1828 711C1827 717 1825 721 1824 726C1822 731 1820 737 1818 741C1815 746 1813 749 1810 752C1808 754 1804 757 1802 758M1824 684C1824 686 1825 692 1825 697C1824 702 1824 708 1823 713C1822 718 1820 724 1819 728C1817 733 1814 739 1813 741M1802 758C1804 758 1808 758 1810 758C1813 757 1816 756 1819 754C1821 752 1822 749 1824 747C1825 744 1826 741 1827 736C1828 732 1828 726 1829 721C1829 716 1830 708 1830 706M1799 645C1800 648 1802 655 1802 660C1803 665 1803 670 1803 676C1803 681 1801 686 1800 691C1799 696 1798 701 1796 706C1795 711 1792 716 1790 721C1788 726 1786 730 1784 734C1782 738 1779 742 1777 745C1775 747 1774 749 1772 752C1770 754 1769 756 1767 758C1765 760 1762 761 1760 763C1757 764 1755 765 1753 766C1750 767 1747 767 1746 767M1746 767C1747 767 1751 769 1755 769C1758 769 1763 769 1767 768C1771 767 1774 765 1777 764C1780 762 1781 760 1782 759M1752 773C1753 773 1758 775 1762 775C1765 775 1770 774 1774 773C1778 772 1782 770 1786 768C1790 766 1794 763 1796 761C1799 759 1800 757 1802 755C1804 752 1807 749 1807 748M1760 769C1759 770 1757 773 1756 776C1754 779 1752 782 1750 784C1747 786 1744 789 1742 790M1730 766C1730 767 1730 770 1729 772C1729 774 1728 776 1727 777C1726 778 1725 779 1724 780C1723 781 1722 780 1721 781M1713 775L1715 777M1683 781C1683 781 1684 783 1686 784C1687 785 1690 786 1693 787C1695 788 1700 790 1701 790"/>
<path d="M1467 562C1467 563 1469 569 1469 573C1470 577 1470 582 1469 588C1468 594 1466 602 1464 610C1463 617 1460 626 1457 634C1455 642 1453 649 1449 658C1445 668 1439 682 1434 692C1429 703 1424 711 1419 720C1414 730 1409 739 1406 747C1402 756 1398 764 1396 772C1393 779 1392 787 1391 792C1390 797 1390 799 1390 800M1466 535C1468 536 1472 537 1474 539C1477 541 1480 545 1482 549C1484 552 1485 556 1486 561C1487 565 1488 570 1488 576C1489 581 1488 586 1488 592C1487 599 1486 605 1485 612C1483 619 1482 625 1479 634C1477 643 1474 657 1470 668C1467 679 1462 688 1458 698C1454 708 1449 718 1446 728C1442 737 1439 747 1436 756C1433 764 1431 773 1430 780C1428 787 1427 797 1427 800M1506 584C1507 585 1509 589 1509 592C1509 596 1510 601 1509 607C1508 613 1507 621 1506 628C1505 635 1503 642 1501 649C1499 656 1497 661 1493 670C1490 680 1485 692 1481 703C1477 714 1473 727 1469 737C1465 748 1462 757 1459 768C1456 778 1453 795 1452 800M1535 566C1535 568 1538 573 1539 578C1540 583 1541 589 1542 595C1543 601 1543 608 1544 614C1544 621 1544 627 1544 634C1543 641 1542 650 1541 656C1540 662 1539 662 1537 670C1535 679 1532 696 1529 708C1526 721 1522 733 1519 745C1515 757 1511 772 1508 781C1505 790 1502 797 1501 800M1597 684C1596 688 1595 700 1594 708C1593 716 1592 724 1591 732C1590 741 1589 753 1588 762C1587 771 1586 780 1586 786C1585 792 1585 798 1585 800M1400 519C1403 518 1412 515 1418 513C1424 512 1430 511 1436 510C1443 510 1449 509 1455 510C1461 510 1467 511 1473 512C1479 513 1486 514 1491 516C1497 517 1503 520 1507 521C1512 523 1515 525 1518 526C1521 528 1524 530 1525 531M1524 532C1526 532 1530 532 1534 534C1538 535 1542 536 1546 539C1550 542 1555 545 1558 549C1562 552 1565 556 1568 558C1571 561 1573 563 1574 564M1507 532C1508 532 1512 534 1514 535C1517 537 1520 539 1522 540C1524 542 1525 544 1526 544M1517 527C1517 528 1519 531 1520 533C1520 534 1520 535 1520 536M1540 580C1543 579 1552 575 1558 572C1564 569 1571 566 1577 563C1583 560 1590 557 1595 554C1600 552 1604 549 1607 548C1610 546 1611 546 1611 546M1611 546C1612 547 1616 550 1618 554C1620 557 1622 563 1624 568C1626 573 1627 579 1628 585C1629 591 1630 597 1630 604C1630 610 1630 616 1629 622C1628 628 1627 633 1625 640C1624 647 1622 659 1620 664C1618 670 1615 671 1611 674C1608 677 1602 681 1597 683C1591 685 1585 685 1580 686C1574 686 1568 686 1563 684C1557 683 1552 681 1548 679C1544 677 1541 675 1540 673C1538 671 1538 667 1538 666M1609 553C1607 555 1601 561 1597 566C1594 571 1589 577 1586 583C1583 588 1581 594 1579 600C1577 605 1576 610 1576 616C1576 621 1577 627 1576 632C1575 636 1575 638 1573 641C1571 644 1569 646 1566 649C1562 651 1557 653 1553 655C1550 656 1545 658 1542 660C1540 661 1538 665 1538 666"/>
<path stroke-opacity=".45" d="M1554 708C1553 712 1551 723 1550 732C1549 742 1549 752 1548 762C1547 772 1547 786 1546 792C1546 799 1546 799 1546 800M1576 691C1576 696 1575 709 1574 719C1573 729 1571 739 1570 750C1569 760 1568 771 1568 780C1568 789 1568 798 1569 804C1569 811 1570 817 1570 820"/>
<path d="M798 1475C796 1477 791 1482 787 1486C782 1489 777 1493 771 1497C764 1501 754 1506 746 1510C738 1514 730 1518 722 1522C714 1526 704 1531 697 1534C691 1538 684 1542 681 1543M807 1481C805 1483 801 1489 797 1494C793 1498 789 1502 784 1507C778 1511 770 1517 762 1521C755 1526 746 1530 738 1534C730 1538 720 1543 714 1546C707 1550 701 1553 697 1555C694 1556 693 1557 693 1557M798 1492L807 1481L876 1521L870 1533L798 1492M845 1515L849 1508L862 1516L858 1523L845 1515M884 1510C882 1510 877 1510 874 1511C872 1512 868 1514 866 1515M884 1510C884 1511 883 1515 882 1518C881 1521 880 1525 879 1526M884 1510C884 1513 884 1521 884 1526C885 1532 886 1537 887 1542C889 1548 891 1553 892 1559C894 1564 895 1569 895 1575C895 1580 894 1586 892 1591C891 1597 888 1603 887 1607C885 1612 883 1618 883 1620M879 1526C879 1528 878 1532 879 1536C879 1540 881 1545 882 1549C883 1553 885 1558 886 1562C887 1566 887 1570 887 1575C887 1580 887 1586 886 1591C885 1597 884 1604 883 1607C882 1611 882 1612 879 1614C877 1616 873 1618 870 1619C866 1620 861 1620 860 1620"/>
</g></defs>
<use href="#lineart" stroke="#8e8886" stroke-width="1.2"/>
<g transform="translate(2684,234) scale(0.32733) translate(-532,-254)"><use href="#lineart" stroke="#a8a09e" stroke-width="2"/></g>
</svg>
</body></html>
